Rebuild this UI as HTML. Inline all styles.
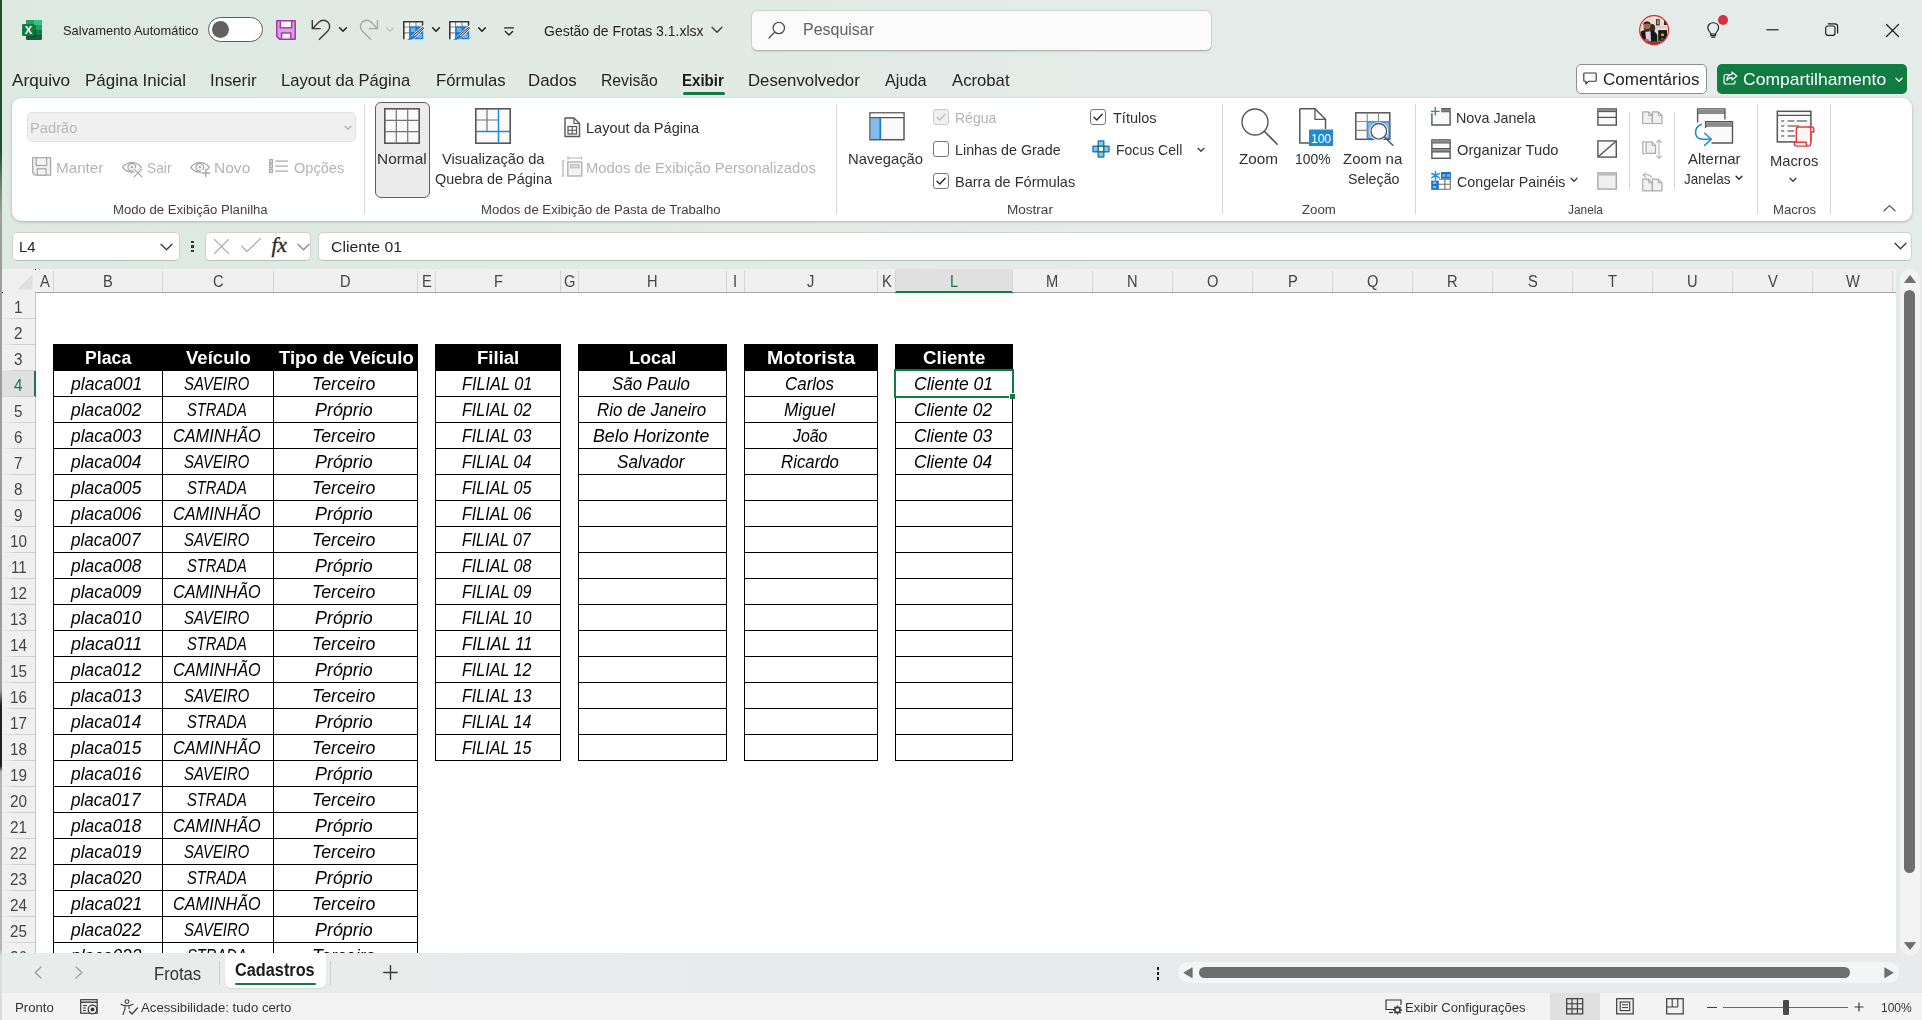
<!DOCTYPE html>
<html lang="pt-BR"><head><meta charset="utf-8"><title>Gestão de Frotas 3.1.xlsx - Excel</title><style>
html,body{margin:0;padding:0;}
body{width:1922px;height:1020px;overflow:hidden;position:relative;background:linear-gradient(90deg,#dee9e2 0,#e1eae5 500px,#e4ebe8 1100px,#e5ebe9 1922px);font-family:"Liberation Sans", sans-serif;}
div,svg,span.t{position:absolute;box-sizing:border-box;}
span.t{white-space:pre;transform-origin:0 50%;}
svg{overflow:visible;}
</style></head>
<body>
<div style="left:0px;top:0px;width:2px;height:1020px;background:linear-gradient(#1b4d2e 0px,#1b4d2e 150px,#6f8576 185px,#9aa09c 215px,#9a9e9b 690px,#1d211f 705px,#1d211f 766px,#b5b7b6 772px,#b5b7b6 950px,#dcdcdc 956px,#dcdcdc 1020px);"></div>
<svg style="left:22px;top:20px;" width="20" height="20" viewBox="0 0 20 20">
<rect x="4" y="0" width="16" height="20" rx="1.3" fill="#185c37"/>
<path d="M4 1.3 Q4 0 5.3 0 H12 V5 H4Z" fill="#21a366"/><path d="M12 0 H18.7 Q20 0 20 1.3 V5 H12Z" fill="#33c481"/>
<rect x="4" y="5" width="8" height="5" fill="#107c41"/><rect x="12" y="5" width="8" height="5" fill="#21a366"/>
<rect x="4" y="10" width="8" height="5" fill="#185c37"/><rect x="12" y="10" width="8" height="5" fill="#107c41"/>
<rect x="5" y="5" width="8.8" height="12" rx="1" fill="#0b3d22" opacity="0.55"/>
<rect x="0" y="4" width="12.5" height="12" rx="1.2" fill="#107c41"/>
<text x="6.35" y="14" font-family="Liberation Sans, sans-serif" font-size="11" font-weight="700" fill="#fff" text-anchor="middle">X</text>
</svg>
<span class="t" style="top:25.00px;font-size:12.6px;line-height:12.6px;color:#242424;left:63.20px;transform:scaleX(1.0241);">Salvamento Automático</span>
<div style="left:208px;top:17px;width:54.5px;height:24.5px;background:#fff;border:1px solid #5c5c5c;border-radius:13px;"></div>
<div style="left:212px;top:21px;width:17px;height:17px;background:#616161;border-radius:50%;"></div>
<svg style="left:276px;top:20px;" width="20" height="20" viewBox="0 0 20 20">
<path d="M0.8 0.8 H19.2 V19.2 H3.6 L0.8 16.4 Z" fill="#dc9fe0" stroke="#9f37a8" stroke-width="1.5" stroke-linejoin="round"/>
<rect x="4.3" y="0.8" width="11.4" height="7" fill="#fbf4fb" stroke="#9f37a8" stroke-width="1.4"/>
<rect x="5.6" y="13" width="9.2" height="6.2" fill="#fbf4fb" stroke="#9f37a8" stroke-width="1.4"/>
</svg>
<svg style="left:310px;top:18px;" width="22" height="24" viewBox="0 0 22 24"><path d="M2.3 2.1 V10.6 H10.7" fill="none" stroke="#3a3a3a" stroke-width="1.4" stroke-linejoin="miter"/><path d="M9 21.7 L17.8 12.9 A6.2 6.2 0 0 0 9 4.1 L2.6 10.4" fill="none" stroke="#3a3a3a" stroke-width="1.4"/></svg>
<svg style="left:338.6px;top:27.3px;" width="8" height="6" viewBox="0 0 8 6"><path d="M0.6 0.8 L4 4.2 L7.4 0.8" fill="none" stroke="#222" stroke-width="1.5" stroke-linecap="round" stroke-linejoin="round"/></svg>
<svg style="left:358px;top:18px;" width="22" height="24" viewBox="0 0 22 24"><path d="M19.5 2.1 V10.6 H11.1" fill="none" stroke="#a8a8a8" stroke-width="1.4" stroke-linejoin="miter"/><path d="M13.1 21.7 L4.3 12.9 A6.2 6.2 0 0 1 13.1 4.1 L19.2 10.4" fill="none" stroke="#a8a8a8" stroke-width="1.4"/></svg>
<svg style="left:386.3px;top:27.3px;" width="8" height="6" viewBox="0 0 8 6"><path d="M0.6 0.8 L4 4.2 L7.4 0.8" fill="none" stroke="#c2c2c2" stroke-width="1.4" stroke-linecap="round" stroke-linejoin="round"/></svg>
<svg style="left:403px;top:21px;" width="21" height="19" viewBox="0 0 21 19">
<rect x="0.7" y="0.7" width="19" height="17.5" fill="#fff"/>
<path d="M0.7 6 H19.7 M0.7 11.8 H19.7 M6.6 0.7 V18 M13 0.7 V18" stroke="#8a8a8a" stroke-width="1.2" fill="none"/>
<rect x="6.4" y="5.4" width="13.8" height="12.8" fill="#1a7ad4"/>
<rect x="7.8" y="6.8" width="4.6" height="4.2" fill="#6db3ee"/><rect x="14" y="12.6" width="5" height="4.4" fill="#6db3ee"/>
<path d="M0 0.8 H20.2 M0.8 0 V18.2 M19.5 0 V5" stroke="#3a3a3a" stroke-width="1.6" fill="none"/>
<path d="M20.5 6.5 L9 17" stroke="#e8f0ec" stroke-width="4.2" stroke-linecap="round"/>
<path d="M19.8 6.3 L20.6 7.4 L11.8 15.8 L10.2 14.4 Z" fill="#d8d8d8" stroke="#333" stroke-width="1" stroke-linejoin="round"/>
<path d="M10.2 14.2 L12 15.9 C11 18 8 19 4 18.8 C6.5 17.8 7.5 15 10.2 14.2Z" fill="#1a7ad4"/>
</svg>
<svg style="left:431.6px;top:27.3px;" width="8" height="6" viewBox="0 0 8 6"><path d="M0.6 0.8 L4 4.2 L7.4 0.8" fill="none" stroke="#222" stroke-width="1.5" stroke-linecap="round" stroke-linejoin="round"/></svg>
<svg style="left:449px;top:21px;" width="21" height="19" viewBox="0 0 21 19">
<rect x="0.7" y="0.7" width="19" height="17.5" fill="#fff"/>
<path d="M0.7 6 H19.7 M0.7 11.8 H19.7 M6.6 0.7 V18 M13 0.7 V18" stroke="#8a8a8a" stroke-width="1.2" fill="none"/>
<rect x="6.4" y="5.4" width="13.8" height="12.8" fill="#1a7ad4"/>
<rect x="7.8" y="6.8" width="4.6" height="4.2" fill="#6db3ee"/><rect x="14" y="12.6" width="5" height="4.4" fill="#6db3ee"/>
<path d="M0 0.8 H20.2 M0.8 0 V18.2 M19.5 0 V5" stroke="#3a3a3a" stroke-width="1.6" fill="none"/>
<path d="M20.5 6.5 L9 17" stroke="#e8f0ec" stroke-width="4.2" stroke-linecap="round"/>
<path d="M19.8 6.3 L20.6 7.4 L11.8 15.8 L10.2 14.4 Z" fill="#d8d8d8" stroke="#333" stroke-width="1" stroke-linejoin="round"/>
<path d="M10.2 14.2 L12 15.9 C11 18 8 19 4 18.8 C6.5 17.8 7.5 15 10.2 14.2Z" fill="#1a7ad4"/>
</svg>
<svg style="left:477.6px;top:27.3px;" width="8" height="6" viewBox="0 0 8 6"><path d="M0.6 0.8 L4 4.2 L7.4 0.8" fill="none" stroke="#222" stroke-width="1.5" stroke-linecap="round" stroke-linejoin="round"/></svg>
<svg style="left:503.5px;top:26.5px;" width="10" height="9" viewBox="0 0 10 9"><path d="M0.6 0.9 H9.4" stroke="#222" stroke-width="1.3" stroke-linecap="round"/><path d="M1.4 4.6 L5 8 L8.6 4.6" fill="none" stroke="#222" stroke-width="1.4" stroke-linecap="round" stroke-linejoin="round"/></svg>
<span class="t" style="top:24.00px;font-size:14.6px;line-height:14.6px;color:#242424;left:544.40px;transform:scaleX(0.9594);">Gestão de Frotas 3.1.xlsx</span>
<svg style="left:711px;top:26.4px;" width="12" height="8" viewBox="0 0 12 8"><path d="M1 1.2 L6 6.2 L11 1.2" fill="none" stroke="#3a3a3a" stroke-width="1.3" stroke-linecap="round" stroke-linejoin="round"/></svg>
<div style="left:752px;top:11px;width:459px;height:38.5px;background:#fbfbfb;border-radius:5px;box-shadow:0 0.5px 2px rgba(0,0,0,0.28),0 0 0 0.5px rgba(0,0,0,0.06);"></div>
<svg style="left:768px;top:21px;" width="18" height="18" viewBox="0 0 18 18"><circle cx="10.8" cy="7" r="5.7" fill="none" stroke="#505050" stroke-width="1.3"/><path d="M6.7 11.2 L1 17" stroke="#505050" stroke-width="1.3" stroke-linecap="round"/></svg>
<span class="t" style="top:22.00px;font-size:16px;line-height:16px;color:#616161;left:803.00px;transform:scaleX(0.9983);">Pesquisar</span>
<svg style="left:1639px;top:14.8px;" width="30.2" height="30.2" viewBox="0 0 30.2 30.2">
<defs><clipPath id="av"><circle cx="15.1" cy="15.1" r="14.2"/></clipPath><filter id="bl" x="-10%" y="-10%" width="120%" height="120%"><feGaussianBlur stdDeviation="0.55"/></filter></defs>
<g clip-path="url(#av)"><g filter="url(#bl)">
<rect x="-2" y="-2" width="34" height="34" fill="#e6ded2"/>
<rect x="-2" y="-2" width="34" height="5" fill="#f4f1ea"/>
<rect x="17" y="4.2" width="3.8" height="6.2" fill="#2f3a52"/><rect x="18" y="5.3" width="1.9" height="4" fill="#b99a55"/>
<rect x="25" y="5.5" width="3" height="4.5" fill="#2a2a2a"/>
<rect x="15" y="11.5" width="15" height="1" fill="#cfc6b8"/>
<ellipse cx="13.3" cy="13.2" rx="2.8" ry="4.2" fill="#3b2b27"/>
<path d="M1.2 31 V18 C1.6 16 3.4 15.4 5.5 15.2 L11.5 15.6 C15.5 16 17.5 17.5 18.3 20.5 V31Z" fill="#121214"/>
<path d="M6.3 16.8 L11.6 16.2 L12 26.5 H7.2 Z" fill="#d9d0e2"/>
<ellipse cx="8" cy="11" rx="3.5" ry="4.6" fill="#9c6a4f"/>
<path d="M4.3 10 C3.8 5.4 12.2 5.4 11.7 10 C10.6 7.9 5.4 7.9 4.3 10Z" fill="#241c1a"/>
<path d="M4.6 12.5 C5 17.2 11 17.2 11.4 12.5 C10.4 14.6 5.6 14.6 4.6 12.5Z" fill="#3a2620"/>
<ellipse cx="7.6" cy="25.4" rx="2.6" ry="1.6" fill="#a9745a"/>
<rect x="19.2" y="15.1" width="8.8" height="10.8" fill="#1c1a18"/>
<ellipse cx="23.5" cy="19.9" rx="1.7" ry="1.4" fill="#d9a62e"/>
<rect x="21.5" y="23.6" width="3.6" height="0.8" fill="#8a8a8a"/>
<rect x="-2" y="26.3" width="34" height="6" fill="#6b4a34"/>
</g></g>
<circle cx="15.1" cy="15.1" r="14.5" fill="none" stroke="#e0262c" stroke-width="1.1"/>
</svg>
<svg style="left:1706.5px;top:22px;" width="12.5" height="16" viewBox="0 0 12.5 16"><path d="M6.2 0.7 C2.9 0.7 0.8 3.1 0.8 5.8 C0.8 7.7 1.9 8.8 2.8 10 C3.3 10.7 3.6 11.2 3.7 12 H8.7 C8.8 11.2 9.1 10.7 9.6 10 C10.5 8.8 11.6 7.7 11.6 5.8 C11.6 3.1 9.5 0.7 6.2 0.7Z" fill="none" stroke="#1f1f1f" stroke-width="1.15"/><path d="M3.9 12 V13.6 H8.5 V12 M4.6 15.3 H7.8" fill="none" stroke="#1f1f1f" stroke-width="1.1" stroke-linecap="round"/></svg>
<div style="left:1717.7px;top:14.7px;width:10.3px;height:10.3px;background:#d9303e;border-radius:50%;"></div>
<svg style="left:1765.5px;top:28.7px;" width="13" height="2" viewBox="0 0 13 2"><path d="M0.4 0.75 H12.6" stroke="#1f1f1f" stroke-width="1.2"/></svg>
<svg style="left:1825.3px;top:23.3px;" width="13.5" height="13.5" viewBox="0 0 13.5 13.5"><rect x="0.7" y="3" width="9.3" height="9.3" rx="2" fill="none" stroke="#1f1f1f" stroke-width="1.2"/><path d="M3.2 0.8 H9.8 C11.5 0.8 12.6 1.9 12.6 3.6 V10" fill="none" stroke="#1f1f1f" stroke-width="1.2" stroke-linecap="round"/></svg>
<svg style="left:1885.7px;top:23.5px;" width="13" height="13" viewBox="0 0 13 13"><path d="M0.5 0.5 L12.5 12.5 M12.5 0.5 L0.5 12.5" stroke="#1f1f1f" stroke-width="1.2" stroke-linecap="round"/></svg>
<span class="t" style="top:72.00px;font-size:16.4px;line-height:16.4px;color:#242424;left:11.50px;transform:scaleX(1.0458);">Arquivo</span>
<span class="t" style="top:72.00px;font-size:16.4px;line-height:16.4px;color:#242424;left:85.47px;transform:scaleX(1.0349);">Página Inicial</span>
<span class="t" style="top:72.00px;font-size:16.4px;line-height:16.4px;color:#242424;left:209.68px;transform:scaleX(1.0204);">Inserir</span>
<span class="t" style="top:72.00px;font-size:16.4px;line-height:16.4px;color:#242424;left:280.99px;transform:scaleX(1.0120);">Layout da Página</span>
<span class="t" style="top:72.00px;font-size:16.4px;line-height:16.4px;color:#242424;left:435.98px;transform:scaleX(1.0207);">Fórmulas</span>
<span class="t" style="top:72.00px;font-size:16.4px;line-height:16.4px;color:#242424;left:528.47px;transform:scaleX(1.0285);">Dados</span>
<span class="t" style="top:72.00px;font-size:16.4px;line-height:16.4px;color:#242424;left:600.74px;transform:scaleX(0.9604);">Revisão</span>
<span class="t" style="top:72.00px;font-size:16.4px;line-height:16.4px;color:#242424;left:747.68px;transform:scaleX(1.0223);">Desenvolvedor</span>
<span class="t" style="top:72.00px;font-size:16.4px;line-height:16.4px;color:#242424;left:885.00px;transform:scaleX(0.9929);">Ajuda</span>
<span class="t" style="top:72.00px;font-size:16.4px;line-height:16.4px;color:#242424;left:952.00px;transform:scaleX(1.0187);">Acrobat</span>
<span class="t" style="top:72.00px;font-size:16.4px;line-height:16.4px;color:#1a1a1a;font-weight:700;left:682.08px;transform:scaleX(0.9188);">Exibir</span>
<div style="left:683px;top:91.5px;width:42px;height:3px;background:#107c41;border-radius:1.5px;"></div>
<div style="left:1576px;top:64px;width:131px;height:30px;background:#fff;border:1px solid #8f8f8f;border-radius:5px;"></div>
<svg style="left:1583px;top:71.5px;" width="14" height="13" viewBox="0 0 14 13"><path d="M1.6 1 H12.4 C12.9 1 13.2 1.3 13.2 1.8 V8.4 C13.2 8.9 12.9 9.2 12.4 9.2 H5.8 L2.8 12 V9.2 H1.6 C1.1 9.2 0.8 8.9 0.8 8.4 V1.8 C0.8 1.3 1.1 1 1.6 1Z" fill="none" stroke="#3a3a3a" stroke-width="1.15" stroke-linejoin="round"/></svg>
<span class="t" style="top:71.00px;font-size:16.4px;line-height:16.4px;color:#242424;left:1602.50px;transform:scaleX(1.0386);">Comentários</span>
<div style="left:1717px;top:64px;width:190px;height:30px;background:#107c41;border-radius:5px;"></div>
<svg style="left:1722.5px;top:71px;" width="15" height="14" viewBox="0 0 15 14"><path d="M5.5 3.5 H3 C1.9 3.5 1 4.4 1 5.5 V11 C1 12.1 1.9 13 3 13 H10 C11.1 13 12 12.1 12 11 V9.8" fill="none" stroke="#fff" stroke-width="1.15" stroke-linecap="round"/><path d="M9 1 L13.8 5 L9 9 V6.6 C6.5 6.4 4.8 7.6 3.8 9.6 C4 6 5.8 3.6 9 3.4Z" fill="none" stroke="#fff" stroke-width="1.1" stroke-linejoin="round"/></svg>
<span class="t" style="top:71.00px;font-size:16.4px;line-height:16.4px;color:#ffffff;left:1743.40px;transform:scaleX(1.0687);">Compartilhamento</span>
<svg style="left:1894.5px;top:76.5px;" width="8" height="6" viewBox="0 0 8 6"><path d="M1 1.2 L4 4.2 L7 1.2" fill="none" stroke="#fff" stroke-width="1.3" stroke-linecap="round" stroke-linejoin="round"/></svg>
<div style="left:12px;top:98px;width:1900px;height:123px;background:#ffffff;border-radius:9px;box-shadow:0 1px 3px rgba(0,0,0,0.22),0 0 1px rgba(0,0,0,0.12);"></div>
<div style="left:364.0px;top:104px;width:1px;height:110px;background:#d6d6d6;"></div>
<div style="left:836.1px;top:104px;width:1px;height:110px;background:#d6d6d6;"></div>
<div style="left:1221.9px;top:104px;width:1px;height:110px;background:#d6d6d6;"></div>
<div style="left:1414.8px;top:104px;width:1px;height:110px;background:#d6d6d6;"></div>
<div style="left:1756.9px;top:104px;width:1px;height:110px;background:#d6d6d6;"></div>
<div style="left:1829.8px;top:104px;width:1px;height:110px;background:#d6d6d6;"></div>
<div style="left:1629.2px;top:111.5px;width:1px;height:77.0px;background:#d6d6d6;"></div>
<div style="left:1673.8px;top:111.5px;width:1px;height:77.0px;background:#d6d6d6;"></div>
<div style="left:27px;top:112px;width:328.5px;height:30px;background:#f0f0f0;border:1px solid #e3e3e3;border-radius:5px;"></div>
<span class="t" style="top:120.00px;font-size:15.2px;line-height:15.2px;color:#b8b8b8;left:29.53px;transform:scaleX(0.9679);">Padrão</span>
<svg style="left:343.5px;top:124.5px;" width="8" height="6.0" viewBox="0 0 8 6.0"><path d="M1 1.2 L4.0 4.2 L7 1.2" fill="none" stroke="#b0b0b0" stroke-width="1.3" stroke-linecap="round" stroke-linejoin="round"/></svg>
<svg style="left:32px;top:157px;" width="19.5" height="19" viewBox="0 0 19.5 19"><path d="M0.7 0.7 H18.6 V18.2 H3.4 L0.7 15.5 Z" fill="#f1f1f1" stroke="#a9a9a9" stroke-width="1.3" stroke-linejoin="round"/><rect x="4.2" y="0.7" width="10.4" height="7.8" fill="#f5f5f5" stroke="#a9a9a9" stroke-width="1.3"/><rect x="5.4" y="11.8" width="8.6" height="6.4" fill="#f5f5f5" stroke="#a9a9a9" stroke-width="1.3"/></svg>
<span class="t" style="top:161.00px;font-size:14.4px;line-height:14.4px;color:#b4b4b4;left:56.24px;transform:scaleX(1.0569);">Manter</span>
<svg style="left:121.7px;top:161.6px;" width="22" height="17" viewBox="0 0 22 17"><path d="M0.7 5.4 C3.8 1.4 7 0.7 10 0.7 C13 0.7 16.2 1.4 19.3 5.4 C16.2 9.4 13 10.1 10 10.1 C7 10.1 3.8 9.4 0.7 5.4Z" fill="none" stroke="#a6a6a6" stroke-width="1.3" stroke-linejoin="round"/><circle cx="9.8" cy="5.3" r="3.9" fill="#f1f1f1" stroke="#a6a6a6" stroke-width="1.2"/><circle cx="9.9" cy="5.2" r="1.1" fill="#a6a6a6"/><path d="M12 7 L20.2 15.2 M20.2 7 L12 15.2" stroke="#fff" stroke-width="3.4"/><path d="M11.8 6.8 L20.2 15.2 M20.2 6.8 L11.8 15.2" stroke="#a6a6a6" stroke-width="1.2"/></svg>
<span class="t" style="top:161.00px;font-size:14.4px;line-height:14.4px;color:#b4b4b4;left:147.30px;transform:scaleX(0.9574);">Sair</span>
<svg style="left:189.7px;top:161.6px;" width="22" height="17" viewBox="0 0 22 17"><path d="M0.7 5.4 C3.8 1.4 7 0.7 10 0.7 C13 0.7 16.2 1.4 19.3 5.4 C16.2 9.4 13 10.1 10 10.1 C7 10.1 3.8 9.4 0.7 5.4Z" fill="none" stroke="#a6a6a6" stroke-width="1.3" stroke-linejoin="round"/><circle cx="9.8" cy="5.3" r="3.9" fill="#f1f1f1" stroke="#a6a6a6" stroke-width="1.2"/><circle cx="9.9" cy="5.2" r="1.1" fill="#a6a6a6"/><path d="M11 8 H21 V16.5 H11Z" fill="#fff"/><path d="M15.8 6.8 V15.3 M11.4 11 H20.2" stroke="#a6a6a6" stroke-width="1.3"/></svg>
<span class="t" style="top:161.00px;font-size:14.4px;line-height:14.4px;color:#b4b4b4;left:214.42px;transform:scaleX(1.0800);">Novo</span>
<svg style="left:269px;top:159.4px;" width="19.5" height="14.2" viewBox="0 0 19.5 14.2"><rect x="0" y="0" width="4" height="14.2" fill="#a9a9a9"/><rect x="1.3" y="1.4" width="1.6" height="1.6" fill="#f5f5f5"/><rect x="1.3" y="6.3" width="1.6" height="1.6" fill="#f5f5f5"/><rect x="1.3" y="11.2" width="1.6" height="1.6" fill="#f5f5f5"/><path d="M0 4.7 H4 M0 9.6 H4" stroke="#d8d8d8" stroke-width="0.8"/><path d="M6.2 2.1 H19 M6.2 7.1 H19 M6.2 12.1 H19" stroke="#a9a9a9" stroke-width="1.4"/></svg>
<span class="t" style="top:161.00px;font-size:14.4px;line-height:14.4px;color:#b4b4b4;left:294.00px;transform:scaleX(1.0122);">Opções</span>
<span class="t" style="top:204.00px;font-size:12.0px;line-height:12.0px;color:#404040;left:113.00px;transform:scaleX(1.0935);">Modo de Exibição Planilha</span>
<div style="left:375px;top:102px;width:55px;height:96px;background:#ebebeb;border:1px solid #5f5f5f;border-radius:6px;"></div>
<svg style="left:384px;top:108px;" width="36" height="36" viewBox="0 0 36 36"><rect x="0.8" y="0.8" width="34.4" height="34.4" fill="#fafafa" stroke="#565656" stroke-width="1.6"/>
<path d="M0.8 12.3 H35.2 M0.8 23.7 H35.2 M12.3 0.8 V35.2 M23.7 0.8 V35.2" stroke="#757575" stroke-width="1.2" fill="none"/></svg>
<span class="t" style="top:152.00px;font-size:14.4px;line-height:14.4px;color:#303030;left:376.73px;transform:scaleX(1.0713);">Normal</span>
<svg style="left:474.8px;top:108px;" width="36" height="36" viewBox="0 0 36 36"><rect x="0.8" y="0.8" width="34.4" height="34.4" fill="#fafafa" stroke="#565656" stroke-width="1.6"/>
<path d="M0.8 12 H23 M12 0.8 V23" stroke="#757575" stroke-width="1.2" fill="none"/>
<path d="M0.8 23.5 H35.2 M23.5 0.8 V35.2" stroke="#1e8ad6" stroke-width="1.5" fill="none"/></svg>
<span class="t" style="top:152.00px;font-size:14.4px;line-height:14.4px;color:#303030;left:442.40px;transform:scaleX(1.0196);">Visualização da</span>
<span class="t" style="top:172.00px;font-size:14.4px;line-height:14.4px;color:#303030;left:434.50px;transform:scaleX(1.0008);">Quebra de Página</span>
<svg style="left:564px;top:117px;" width="16.5" height="20.5" viewBox="0 0 16.5 20.5"><path d="M1 1 H10 L15.5 6.5 V19.5 H1 Z" fill="#fafafa" stroke="#565656" stroke-width="1.4" stroke-linejoin="round"/><path d="M10 1 V6.5 H15.5" fill="none" stroke="#565656" stroke-width="1.2"/>
<rect x="4" y="9.5" width="8.5" height="7.5" fill="none" stroke="#565656" stroke-width="1.2"/><path d="M4 13.2 H12.5 M8.2 9.5 V17" stroke="#565656" stroke-width="1.1"/></svg>
<span class="t" style="top:121.00px;font-size:14.4px;line-height:14.4px;color:#303030;left:586.39px;transform:scaleX(1.0098);">Layout da Página</span>
<svg style="left:562px;top:157px;" width="21" height="20" viewBox="0 0 21 20"><path d="M1 4 V19 M-0.5 4 H2.5 M-0.5 19 H2.5" stroke="#b4b4b4" stroke-width="1.2"/><path d="M6 1 H19.5 M6 -0.5 V2.5 M19.5 -0.5 V2.5" stroke="#b4b4b4" stroke-width="1.2"/>
<rect x="5.8" y="5" width="14" height="14" fill="#f3f3f3" stroke="#b4b4b4" stroke-width="1.4"/><rect x="8.5" y="7.8" width="8.5" height="3" fill="#e0e0e0" stroke="#b4b4b4" stroke-width="1"/></svg>
<span class="t" style="top:161.00px;font-size:14.4px;line-height:14.4px;color:#b4b4b4;left:586.37px;transform:scaleX(1.0261);">Modos de Exibição Personalizados</span>
<span class="t" style="top:204.00px;font-size:12.0px;line-height:12.0px;color:#404040;left:480.60px;transform:scaleX(1.0951);">Modos de Exibição de Pasta de Trabalho</span>
<svg style="left:869px;top:112px;" width="36" height="28.5" viewBox="0 0 36 28.5"><rect x="1" y="0.9" width="34" height="26.8" fill="#fafafa" stroke="#565656" stroke-width="1.5"/>
<rect x="1.7" y="5.8" width="9.6" height="21.2" fill="#80bdf0"/><rect x="1.7" y="1.6" width="32.6" height="3.4" fill="#fff"/><path d="M1 5.6 H35" stroke="#565656" stroke-width="1.4"/><path d="M11.3 6.2 V27" stroke="#1e78c8" stroke-width="1.7"/></svg>
<span class="t" style="top:152.00px;font-size:14.4px;line-height:14.4px;color:#303030;left:848.37px;transform:scaleX(1.0320);">Navegação</span>
<div style="left:933px;top:109.3px;width:16px;height:16px;background:#f0f0f0;border:1px solid #c8c8c8;border-radius:3px;"></div>
<svg style="left:936px;top:113.3px;" width="10" height="8" viewBox="0 0 10 8"><path d="M1 4.2 L3.8 7 L9.2 1.2" fill="none" stroke="#c0c0c0" stroke-width="1.3" stroke-linecap="round" stroke-linejoin="round"/></svg>
<span class="t" style="top:111.00px;font-size:14.4px;line-height:14.4px;color:#b4b4b4;left:954.93px;transform:scaleX(0.9734);">Régua</span>
<div style="left:933px;top:141.3px;width:16px;height:16px;background:#fff;border:1px solid #767676;border-radius:3px;"></div>
<span class="t" style="top:143.00px;font-size:14.4px;line-height:14.4px;color:#303030;left:954.91px;transform:scaleX(0.9933);">Linhas de Grade</span>
<div style="left:933px;top:173.3px;width:16px;height:16px;background:#fff;border:1px solid #767676;border-radius:3px;"></div>
<svg style="left:936px;top:177.3px;" width="10" height="8" viewBox="0 0 10 8"><path d="M1 4.2 L3.8 7 L9.2 1.2" fill="none" stroke="#242424" stroke-width="1.3" stroke-linecap="round" stroke-linejoin="round"/></svg>
<span class="t" style="top:175.00px;font-size:14.4px;line-height:14.4px;color:#303030;left:954.89px;transform:scaleX(1.0087);">Barra de Fórmulas</span>
<div style="left:1090px;top:109.3px;width:16px;height:16px;background:#fff;border:1px solid #767676;border-radius:3px;"></div>
<svg style="left:1093px;top:113.3px;" width="10" height="8" viewBox="0 0 10 8"><path d="M1 4.2 L3.8 7 L9.2 1.2" fill="none" stroke="#242424" stroke-width="1.3" stroke-linecap="round" stroke-linejoin="round"/></svg>
<span class="t" style="top:111.00px;font-size:14.4px;line-height:14.4px;color:#303030;left:1112.70px;transform:scaleX(1.0072);">Títulos</span>
<svg style="left:1092px;top:140px;" width="18" height="18" viewBox="0 0 18 18"><path d="M6.2 1 H11.8 V6.2 H17 V11.8 H11.8 V17 H6.2 V11.8 H1 V6.2 H6.2 Z" fill="#8cc4f0" stroke="#1e78c8" stroke-width="1.4" stroke-linejoin="round"/>
<rect x="6.2" y="6.2" width="5.6" height="5.6" fill="#fff" stroke="#107c41" stroke-width="1.4"/></svg>
<span class="t" style="top:143.00px;font-size:14.4px;line-height:14.4px;color:#303030;left:1115.53px;transform:scaleX(0.9749);">Focus Cell</span>
<svg style="left:1197.3px;top:146.8px;" width="8" height="6.0" viewBox="0 0 8 6.0"><path d="M1 1.2 L4.0 4.2 L7 1.2" fill="none" stroke="#3a3a3a" stroke-width="1.3" stroke-linecap="round" stroke-linejoin="round"/></svg>
<span class="t" style="top:204.00px;font-size:12.0px;line-height:12.0px;color:#404040;left:1006.60px;transform:scaleX(1.1285);">Mostrar</span>
<svg style="left:1241px;top:108px;" width="38" height="38" viewBox="0 0 38 38"><circle cx="14" cy="14" r="13" fill="none" stroke="#565656" stroke-width="1.4"/><path d="M23.2 23.2 L36.2 36.2" stroke="#565656" stroke-width="1.6" stroke-linecap="round"/></svg>
<span class="t" style="top:152.00px;font-size:14.4px;line-height:14.4px;color:#303030;left:1239.20px;transform:scaleX(1.0626);">Zoom</span>
<svg style="left:1299px;top:108px;" width="35" height="39" viewBox="0 0 35 39"><path d="M0.8 0.8 H16 L26.5 11.3 V21 M10 35 H0.8 V0.8" fill="none" stroke="#565656" stroke-width="1.5" stroke-linejoin="round"/><path d="M16 0.8 V11.3 H26.5" fill="none" stroke="#565656" stroke-width="1.3"/>
<rect x="10" y="21.5" width="24" height="16.5" fill="#1e8ad6"/>
<text x="22" y="35" font-family="Liberation Sans, sans-serif" font-size="13" fill="#fff" text-anchor="middle" textLength="20" lengthAdjust="spacingAndGlyphs">100</text></svg>
<span class="t" style="top:152.00px;font-size:14.4px;line-height:14.4px;color:#303030;left:1295.04px;transform:scaleX(0.9636);">100%</span>
<svg style="left:1355px;top:112px;" width="39" height="34" viewBox="0 0 39 34"><rect x="0.8" y="0.8" width="34" height="26.5" fill="#fafafa" stroke="#565656" stroke-width="1.5"/>
<rect x="12.5" y="9.8" width="22" height="17" fill="#7dbbee" stroke="#1e78c8" stroke-width="1.2"/>
<path d="M0.8 9.5 H34.8 M0.8 18.4 H12 M12.2 0.8 V27 M23.5 0.8 V9.5" stroke="#8a8a8a" stroke-width="1.1" fill="none"/>
<circle cx="23.8" cy="19.3" r="9.3" fill="#fff"/><circle cx="23.8" cy="19.3" r="7.8" fill="#fafafa" stroke="#565656" stroke-width="1.4"/><path d="M29.5 25 L37.8 33.2" stroke="#565656" stroke-width="1.5" stroke-linecap="round"/></svg>
<span class="t" style="top:152.00px;font-size:14.4px;line-height:14.4px;color:#303030;left:1343.00px;transform:scaleX(1.0443);">Zoom na</span>
<span class="t" style="top:172.00px;font-size:14.4px;line-height:14.4px;color:#303030;left:1347.50px;transform:scaleX(0.9904);">Seleção</span>
<span class="t" style="top:204.00px;font-size:12.0px;line-height:12.0px;color:#404040;left:1302.00px;transform:scaleX(1.0985);">Zoom</span>
<svg style="left:1431px;top:108px;" width="20" height="18" viewBox="0 0 20 18"><path d="M0.9 5.3 V17 H19.1 V3.5 H10.2" fill="#fafafa" stroke="#565656" stroke-width="1.4" stroke-linejoin="miter"/><rect x="10.2" y="0.2" width="9.6" height="3.3" fill="#858585"/><path d="M10.2 0.7 H19.8" stroke="#565656" stroke-width="1.2"/>
<path d="M4.3 -1 V7.6 M0 3.3 H8.6" stroke="#2b9b3f" stroke-width="1.35"/></svg>
<span class="t" style="top:111.00px;font-size:14.4px;line-height:14.4px;color:#303030;left:1455.71px;transform:scaleX(0.9950);">Nova Janela</span>
<svg style="left:1431px;top:139px;" width="20" height="20" viewBox="0 0 20 20"><rect x="0.9" y="0.9" width="18.2" height="18.4" fill="#fafafa" stroke="#565656" stroke-width="1.4"/>
<rect x="1.2" y="1.2" width="17.6" height="2.6" fill="#8a8a8a"/><rect x="1.2" y="10.3" width="17.6" height="2.4" fill="#8a8a8a"/>
<path d="M0.9 4 H19.1 M0.9 9.7 H19.1 M0.9 12.9 H19.1" stroke="#565656" stroke-width="1.2"/></svg>
<span class="t" style="top:143.00px;font-size:14.4px;line-height:14.4px;color:#303030;left:1456.70px;transform:scaleX(1.0237);">Organizar Tudo</span>
<svg style="left:1431px;top:172px;" width="20" height="18" viewBox="0 0 20 18"><rect x="8.2" y="6.8" width="11.2" height="10.6" fill="#fff"/>
<rect x="10" y="0" width="9.9" height="6.7" fill="#1a6fc4"/><rect x="11.4" y="2.2" width="3" height="2.6" fill="#7fb5e8"/><rect x="15.8" y="2.2" width="3" height="2.6" fill="#7fb5e8"/>
<rect x="0.2" y="8.6" width="7.6" height="9.3" fill="#1a6fc4"/><rect x="1.8" y="9.6" width="3.6" height="2.4" fill="#7fb5e8"/><rect x="1.8" y="13.8" width="3.6" height="2.4" fill="#7fb5e8"/>
<path d="M7.8 12.3 H19.8 M13.9 6.8 V17.8 M19.3 6.8 V17.8 M7.8 17.3 H19.8 M8 7.2 H19.8" stroke="#6e6e6e" stroke-width="1.1" fill="none"/>
<path d="M4.5 -0.6 V7.8 M0.8 1.5 L8.2 5.7 M8.2 1.5 L0.8 5.7" stroke="#1e8fe0" stroke-width="1.5" stroke-linecap="round"/></svg>
<span class="t" style="top:175.00px;font-size:14.4px;line-height:14.4px;color:#303030;left:1456.70px;transform:scaleX(0.9899);">Congelar Painéis</span>
<svg style="left:1569.8px;top:176.8px;" width="8" height="6.0" viewBox="0 0 8 6.0"><path d="M1 1.2 L4.0 4.2 L7 1.2" fill="none" stroke="#3a3a3a" stroke-width="1.3" stroke-linecap="round" stroke-linejoin="round"/></svg>
<span class="t" style="top:204.00px;font-size:12.0px;line-height:12.0px;color:#404040;left:1568.40px;transform:scaleX(0.9891);">Janela</span>
<svg style="left:1597px;top:108px;" width="20.5" height="18" viewBox="0 0 20.5 18"><rect x="0.9" y="0.9" width="18.4" height="16.2" fill="#fafafa" stroke="#565656" stroke-width="1.4"/><rect x="1.2" y="1.2" width="17.8" height="2.2" fill="#8a8a8a"/><path d="M0.9 3.6 H19.3" stroke="#565656" stroke-width="1.1"/><path d="M0.9 9.4 H19.3" stroke="#565656" stroke-width="1.3"/></svg>
<svg style="left:1597px;top:140px;" width="20.5" height="18" viewBox="0 0 20.5 18"><rect x="0.9" y="0.9" width="18.4" height="16.2" fill="#fafafa" stroke="#565656" stroke-width="1.4"/><path d="M1.2 16.8 L19 1.2" stroke="#565656" stroke-width="1.4"/></svg>
<svg style="left:1597px;top:172px;" width="20.5" height="18" viewBox="0 0 20.5 18"><rect x="0.9" y="0.9" width="18.4" height="16.2" fill="#f0f0f0" stroke="#a9a9a9" stroke-width="1.4"/><rect x="1.2" y="1.2" width="17.8" height="2.4" fill="#bdbdbd"/></svg>
<svg style="left:1642px;top:110.5px;" width="21" height="13" viewBox="0 0 21 13"><path d="M0.7 0.9 H6.699999999999999 L10.299999999999999 4.5 V12.5 H0.7 Z" fill="#f0f0f0" stroke="#ababab" stroke-width="1.2" stroke-linejoin="round"/><path d="M6.699999999999999 0.9 V4.5 H10.299999999999999" fill="none" stroke="#ababab" stroke-width="1"/><path d="M10.4 0.9 H16.4 L20.0 4.5 V12.5 H10.4 Z" fill="#f0f0f0" stroke="#ababab" stroke-width="1.2" stroke-linejoin="round"/><path d="M16.4 0.9 V4.5 H20.0" fill="none" stroke="#ababab" stroke-width="1"/></svg>
<svg style="left:1642px;top:139px;" width="21" height="21" viewBox="0 0 21 21"><path d="M3 2.8 H0.8 V14.6 H3" stroke="#ababab" stroke-width="1.2" fill="none"/><path d="M4 2.8 H10.0 L13.6 6.4 V14.399999999999999 H4 Z" fill="#f0f0f0" stroke="#ababab" stroke-width="1.2" stroke-linejoin="round"/><path d="M10.0 2.8 V6.4 H13.6" fill="none" stroke="#ababab" stroke-width="1"/><path d="M17 1 V19.2 M14.3 3.8 L17 0.9 L19.7 3.8 M14.3 16.6 L17 19.5 L19.7 16.6" stroke="#bdbdbd" stroke-width="1.3" fill="none"/></svg>
<svg style="left:1642px;top:170.5px;" width="21" height="21" viewBox="0 0 21 21"><path d="M1.2 4.2 C5 3 8.5 4 9.8 6.6 M3.8 1.6 L1 4.3 L4.2 6.6" stroke="#bdbdbd" stroke-width="1.2" fill="none" stroke-linecap="round"/><path d="M0.7 8.2 H6.699999999999999 L10.299999999999999 11.799999999999999 V19.799999999999997 H0.7 Z" fill="#f0f0f0" stroke="#ababab" stroke-width="1.2" stroke-linejoin="round"/><path d="M6.699999999999999 8.2 V11.799999999999999 H10.299999999999999" fill="none" stroke="#ababab" stroke-width="1"/><path d="M10.4 8.2 H16.4 L20.0 11.799999999999999 V19.799999999999997 H10.4 Z" fill="#f0f0f0" stroke="#ababab" stroke-width="1.2" stroke-linejoin="round"/><path d="M16.4 8.2 V11.799999999999999 H20.0" fill="none" stroke="#ababab" stroke-width="1"/></svg>
<svg style="left:1694px;top:108px;" width="40" height="39" viewBox="0 0 40 39"><path d="M3.6 14.5 V0.9 H30.9 V11.6" fill="#fafafa" stroke="#565656" stroke-width="1.4"/><rect x="4.3" y="1.6" width="25.9" height="2.9" fill="#8a8a8a"/><path d="M3.6 5.1 H30.9" stroke="#565656" stroke-width="1.2"/>
<path d="M11.6 20 V13.7 H38.5 V35 H17.5" fill="#fafafa" stroke="#565656" stroke-width="1.4"/><rect x="12.3" y="14.4" width="25.5" height="2.9" fill="#8a8a8a"/><path d="M11.6 18 H38.5" stroke="#565656" stroke-width="1.2"/>
<path d="M7.3 16.2 C-0.5 19.5 -0.8 31 9 31.2 H16.5" fill="none" stroke="#1e8ad6" stroke-width="1.5" stroke-linecap="round"/><path d="M10.6 25.2 L17.3 31.2 L10.6 37.4" fill="none" stroke="#1e8ad6" stroke-width="1.5" stroke-linecap="round" stroke-linejoin="round"/></svg>
<span class="t" style="top:152.00px;font-size:14.4px;line-height:14.4px;color:#303030;left:1688.00px;transform:scaleX(1.0436);">Alternar</span>
<span class="t" style="top:172.00px;font-size:14.4px;line-height:14.4px;color:#303030;left:1684.30px;transform:scaleX(0.9351);">Janelas</span>
<svg style="left:1735.3px;top:174.6px;" width="8" height="6.0" viewBox="0 0 8 6.0"><path d="M1 1.2 L4.0 4.2 L7 1.2" fill="none" stroke="#222" stroke-width="1.3" stroke-linecap="round" stroke-linejoin="round"/></svg>
<svg style="left:1776px;top:109.5px;" width="40" height="38" viewBox="0 0 40 38"><rect x="1.3" y="1.3" width="33.6" height="30.6" fill="#fafafa" stroke="#565656" stroke-width="1.5"/><path d="M1.3 5.4 H34.9" stroke="#565656" stroke-width="1.4"/>
<path d="M5.2 11 H8.2 M11.6 11 H18.4 M20.8 11 H31 M5.2 16 H8.2 M11.6 16 H23 M5.2 21 H8.2 M11.6 21 H18 M5.2 26 H8.2 M11.6 26 H19" stroke="#7a7a7a" stroke-width="1.3"/>
<path d="M20.3 33 V19.5 C20.3 17.8 21.3 17 22.8 17 H35.5 C37.2 17 37.8 18 37.8 19.5 V22 H34.8 V33.5 C34.8 35.2 33.8 36.1 32.3 36.1 H20.8 C19 36.1 18.3 35.2 18.3 33.5 V32.2 H30.2 V33.5 C30.2 35.2 31 36.1 32.3 36.1" fill="#fdf6f6" stroke="#e8393f" stroke-width="1.4" stroke-linejoin="round"/>
<path d="M34.8 22 V19.5 C34.8 18 34.2 17 32.8 17" fill="none" stroke="#e8393f" stroke-width="1.3"/></svg>
<span class="t" style="top:154.00px;font-size:14.4px;line-height:14.4px;color:#303030;left:1769.58px;transform:scaleX(1.0243);">Macros</span>
<svg style="left:1789.4px;top:177.2px;" width="8" height="6.0" viewBox="0 0 8 6.0"><path d="M1 1.2 L4.0 4.2 L7 1.2" fill="none" stroke="#3a3a3a" stroke-width="1.3" stroke-linecap="round" stroke-linejoin="round"/></svg>
<span class="t" style="top:204.00px;font-size:12.0px;line-height:12.0px;color:#404040;left:1772.50px;transform:scaleX(1.0956);">Macros</span>
<svg style="left:1883.4px;top:203.6px;" width="13" height="8" viewBox="0 0 13 8"><path d="M1 6.8 L6.5 1.6 L12 6.8" fill="none" stroke="#565656" stroke-width="1.3" stroke-linecap="round" stroke-linejoin="round"/></svg>
<div style="left:12px;top:231.5px;width:168px;height:29.5px;background:#fff;border-radius:5px;border:1px solid #ced2d0;border-bottom-color:#b9bdbb;"></div>
<span class="t" style="top:239.00px;font-size:15px;line-height:15px;color:#242424;left:19.01px;transform:scaleX(0.9907);">L4</span>
<svg style="left:159.5px;top:243px;" width="13" height="8" viewBox="0 0 13 8"><path d="M1 1.2 L6.5 6.7 L12 1.2" fill="none" stroke="#3a3a3a" stroke-width="1.3" stroke-linecap="round" stroke-linejoin="round"/></svg>
<div style="left:191.3px;top:240.6px;width:2.7px;height:2.7px;background:#3a3a3a;"></div>
<div style="left:191.3px;top:245.1px;width:2.7px;height:2.7px;background:#3a3a3a;"></div>
<div style="left:191.3px;top:249.6px;width:2.7px;height:2.7px;background:#3a3a3a;"></div>
<div style="left:205.3px;top:231.5px;width:106.2px;height:29.5px;background:#fff;border-radius:5px;border:1px solid #ced2d0;border-bottom-color:#b9bdbb;"></div>
<svg style="left:212.5px;top:237.5px;" width="17" height="17" viewBox="0 0 17 17"><path d="M1.5 1.5 L15.5 15.5 M15.5 1.5 L1.5 15.5" stroke="#b0b0b0" stroke-width="1.3" stroke-linecap="round"/></svg>
<svg style="left:240px;top:237.3px;" width="22" height="16" viewBox="0 0 22 16"><path d="M1.5 9 L7 14.5 L20.5 1.5" fill="none" stroke="#b0b0b0" stroke-width="1.3" stroke-linecap="round" stroke-linejoin="round"/></svg>
<span class="t" style="left:271.5px;top:234px;font-family:'Liberation Serif',serif;font-style:italic;font-weight:400;font-size:21.5px;line-height:22px;color:#2a2a2a;letter-spacing:-0.3px;-webkit-text-stroke:0.35px #2a2a2a;">fx</span>
<svg style="left:297px;top:243px;" width="13" height="8" viewBox="0 0 13 8"><path d="M1 1.2 L6.5 6.7 L12 1.2" fill="none" stroke="#8a8a8a" stroke-width="1.3" stroke-linecap="round" stroke-linejoin="round"/></svg>
<div style="left:318px;top:231.5px;width:1593.7px;height:29.5px;background:#fff;border-radius:5px;border:1px solid #ced2d0;border-bottom-color:#b9bdbb;"></div>
<span class="t" style="top:239.00px;font-size:15px;line-height:15px;color:#242424;left:330.70px;transform:scaleX(1.0506);">Cliente 01</span>
<svg style="left:1894px;top:242px;" width="13" height="8" viewBox="0 0 13 8"><path d="M1 1.2 L6.5 6.7 L12 1.2" fill="none" stroke="#3a3a3a" stroke-width="1.3" stroke-linecap="round" stroke-linejoin="round"/></svg>
<div style="left:2px;top:269px;width:1894px;height:24px;background:#f0f0f0;"></div>
<div style="left:2px;top:293px;width:34px;height:660px;background:#f0f0f0;"></div>
<div style="left:36px;top:293px;width:1860px;height:660px;background:#fff;"></div>
<div style="left:895px;top:269px;width:118px;height:22px;background:#e0e0e0;"></div>
<div style="left:895px;top:291px;width:118px;height:2px;background:#107c41;"></div>
<div style="left:53px;top:271px;width:1px;height:21px;background:#d4d4d4;"></div>
<span class="t" style="top:274.00px;font-size:15.6px;line-height:15.6px;color:#444;left:40.11px;transform:scaleX(0.9400);">A</span>
<div style="left:162px;top:271px;width:1px;height:21px;background:#d4d4d4;"></div>
<span class="t" style="top:274.00px;font-size:15.6px;line-height:15.6px;color:#444;left:103.11px;transform:scaleX(0.9400);">B</span>
<div style="left:273px;top:271px;width:1px;height:21px;background:#d4d4d4;"></div>
<span class="t" style="top:274.00px;font-size:15.6px;line-height:15.6px;color:#444;left:212.71px;transform:scaleX(0.9400);">C</span>
<div style="left:417px;top:271px;width:1px;height:21px;background:#d4d4d4;"></div>
<span class="t" style="top:274.00px;font-size:15.6px;line-height:15.6px;color:#444;left:340.21px;transform:scaleX(0.9400);">D</span>
<div style="left:435px;top:271px;width:1px;height:21px;background:#d4d4d4;"></div>
<span class="t" style="top:274.00px;font-size:15.6px;line-height:15.6px;color:#444;left:421.61px;transform:scaleX(0.9400);">E</span>
<div style="left:560px;top:271px;width:1px;height:21px;background:#d4d4d4;"></div>
<span class="t" style="top:274.00px;font-size:15.6px;line-height:15.6px;color:#444;left:493.52px;transform:scaleX(0.9400);">F</span>
<div style="left:578px;top:271px;width:1px;height:21px;background:#d4d4d4;"></div>
<span class="t" style="top:274.00px;font-size:15.6px;line-height:15.6px;color:#444;left:563.80px;transform:scaleX(0.9400);">G</span>
<div style="left:726px;top:271px;width:1px;height:21px;background:#d4d4d4;"></div>
<span class="t" style="top:274.00px;font-size:15.6px;line-height:15.6px;color:#444;left:647.21px;transform:scaleX(0.9400);">H</span>
<div style="left:744px;top:271px;width:1px;height:21px;background:#d4d4d4;"></div>
<span class="t" style="top:274.00px;font-size:15.6px;line-height:15.6px;color:#444;left:733.46px;transform:scaleX(0.9400);">I</span>
<div style="left:877px;top:271px;width:1px;height:21px;background:#d4d4d4;"></div>
<span class="t" style="top:274.00px;font-size:15.6px;line-height:15.6px;color:#444;left:807.34px;transform:scaleX(0.9400);">J</span>
<div style="left:895px;top:271px;width:1px;height:21px;background:#d4d4d4;"></div>
<span class="t" style="top:274.00px;font-size:15.6px;line-height:15.6px;color:#444;left:881.61px;transform:scaleX(0.9400);">K</span>
<div style="left:1012px;top:271px;width:1px;height:21px;background:#d4d4d4;"></div>
<span class="t" style="top:274.00px;font-size:15.6px;line-height:15.6px;color:#107c41;left:949.92px;transform:scaleX(0.9400);">L</span>
<div style="left:1092px;top:271px;width:1px;height:21px;background:#d4d4d4;"></div>
<span class="t" style="top:274.00px;font-size:15.6px;line-height:15.6px;color:#444;left:1046.39px;transform:scaleX(0.9400);">M</span>
<div style="left:1172px;top:271px;width:1px;height:21px;background:#d4d4d4;"></div>
<span class="t" style="top:274.00px;font-size:15.6px;line-height:15.6px;color:#444;left:1127.21px;transform:scaleX(0.9400);">N</span>
<div style="left:1252px;top:271px;width:1px;height:21px;background:#d4d4d4;"></div>
<span class="t" style="top:274.00px;font-size:15.6px;line-height:15.6px;color:#444;left:1206.80px;transform:scaleX(0.9400);">O</span>
<div style="left:1332px;top:271px;width:1px;height:21px;background:#d4d4d4;"></div>
<span class="t" style="top:274.00px;font-size:15.6px;line-height:15.6px;color:#444;left:1287.61px;transform:scaleX(0.9400);">P</span>
<div style="left:1412px;top:271px;width:1px;height:21px;background:#d4d4d4;"></div>
<span class="t" style="top:274.00px;font-size:15.6px;line-height:15.6px;color:#444;left:1366.80px;transform:scaleX(0.9400);">Q</span>
<div style="left:1492px;top:271px;width:1px;height:21px;background:#d4d4d4;"></div>
<span class="t" style="top:274.00px;font-size:15.6px;line-height:15.6px;color:#444;left:1447.21px;transform:scaleX(0.9400);">R</span>
<div style="left:1572px;top:271px;width:1px;height:21px;background:#d4d4d4;"></div>
<span class="t" style="top:274.00px;font-size:15.6px;line-height:15.6px;color:#444;left:1527.61px;transform:scaleX(0.9400);">S</span>
<div style="left:1652px;top:271px;width:1px;height:21px;background:#d4d4d4;"></div>
<span class="t" style="top:274.00px;font-size:15.6px;line-height:15.6px;color:#444;left:1608.02px;transform:scaleX(0.9400);">T</span>
<div style="left:1732px;top:271px;width:1px;height:21px;background:#d4d4d4;"></div>
<span class="t" style="top:274.00px;font-size:15.6px;line-height:15.6px;color:#444;left:1687.21px;transform:scaleX(0.9400);">U</span>
<div style="left:1812px;top:271px;width:1px;height:21px;background:#d4d4d4;"></div>
<span class="t" style="top:274.00px;font-size:15.6px;line-height:15.6px;color:#444;left:1767.61px;transform:scaleX(0.9400);">V</span>
<div style="left:1892px;top:271px;width:1px;height:21px;background:#d4d4d4;"></div>
<span class="t" style="top:274.00px;font-size:15.6px;line-height:15.6px;color:#444;left:1845.58px;transform:scaleX(0.9400);">W</span>
<div style="left:35px;top:292px;width:860px;height:1px;background:#a6a6a6;"></div>
<div style="left:1013px;top:292px;width:883px;height:1px;background:#a6a6a6;"></div>
<div style="left:35px;top:293px;width:1px;height:660px;background:#c6c6c6;"></div>
<svg style="left:16.5px;top:273.5px;" width="16" height="15.5" viewBox="0 0 16 15.5"><path d="M15.5 0 V15.5 H0 Z" fill="#dfdfdf"/></svg>
<div style="left:35px;top:269px;width:1px;height:1px;background:#111;"></div>
<div style="left:2px;top:292px;width:1px;height:1px;background:#111;"></div>
<div style="left:2px;top:371px;width:32px;height:26px;background:#e0e0e0;"></div>
<div style="left:34px;top:371px;width:2px;height:26px;background:#107c41;"></div>
<div style="left:2px;top:318px;width:33px;height:1px;background:linear-gradient(90deg,rgba(208,208,208,0) 0,#d0d0d0 45%);"></div>
<span class="t" style="top:299.00px;font-size:16.4px;line-height:16.4px;color:#444;left:14.46px;transform:scaleX(0.9300);">1</span>
<div style="left:2px;top:344px;width:33px;height:1px;background:linear-gradient(90deg,rgba(208,208,208,0) 0,#d0d0d0 45%);"></div>
<span class="t" style="top:325.00px;font-size:16.4px;line-height:16.4px;color:#444;left:14.46px;transform:scaleX(0.9300);">2</span>
<div style="left:2px;top:370px;width:33px;height:1px;background:linear-gradient(90deg,rgba(208,208,208,0) 0,#d0d0d0 45%);"></div>
<span class="t" style="top:351.00px;font-size:16.4px;line-height:16.4px;color:#444;left:14.46px;transform:scaleX(0.9300);">3</span>
<div style="left:2px;top:396px;width:33px;height:1px;background:linear-gradient(90deg,rgba(208,208,208,0) 0,#d0d0d0 45%);"></div>
<span class="t" style="top:377.00px;font-size:16.4px;line-height:16.4px;color:#107c41;left:14.46px;transform:scaleX(0.9300);">4</span>
<div style="left:2px;top:422px;width:33px;height:1px;background:linear-gradient(90deg,rgba(208,208,208,0) 0,#d0d0d0 45%);"></div>
<span class="t" style="top:403.00px;font-size:16.4px;line-height:16.4px;color:#444;left:14.46px;transform:scaleX(0.9300);">5</span>
<div style="left:2px;top:448px;width:33px;height:1px;background:linear-gradient(90deg,rgba(208,208,208,0) 0,#d0d0d0 45%);"></div>
<span class="t" style="top:429.00px;font-size:16.4px;line-height:16.4px;color:#444;left:14.46px;transform:scaleX(0.9300);">6</span>
<div style="left:2px;top:474px;width:33px;height:1px;background:linear-gradient(90deg,rgba(208,208,208,0) 0,#d0d0d0 45%);"></div>
<span class="t" style="top:455.00px;font-size:16.4px;line-height:16.4px;color:#444;left:14.46px;transform:scaleX(0.9300);">7</span>
<div style="left:2px;top:500px;width:33px;height:1px;background:linear-gradient(90deg,rgba(208,208,208,0) 0,#d0d0d0 45%);"></div>
<span class="t" style="top:481.00px;font-size:16.4px;line-height:16.4px;color:#444;left:14.46px;transform:scaleX(0.9300);">8</span>
<div style="left:2px;top:526px;width:33px;height:1px;background:linear-gradient(90deg,rgba(208,208,208,0) 0,#d0d0d0 45%);"></div>
<span class="t" style="top:507.00px;font-size:16.4px;line-height:16.4px;color:#444;left:14.46px;transform:scaleX(0.9300);">9</span>
<div style="left:2px;top:552px;width:33px;height:1px;background:linear-gradient(90deg,rgba(208,208,208,0) 0,#d0d0d0 45%);"></div>
<span class="t" style="top:533.00px;font-size:16.4px;line-height:16.4px;color:#444;left:10.22px;transform:scaleX(0.9300);">10</span>
<div style="left:2px;top:578px;width:33px;height:1px;background:linear-gradient(90deg,rgba(208,208,208,0) 0,#d0d0d0 45%);"></div>
<span class="t" style="top:559.00px;font-size:16.4px;line-height:16.4px;color:#444;left:10.79px;transform:scaleX(0.9300);">11</span>
<div style="left:2px;top:604px;width:33px;height:1px;background:linear-gradient(90deg,rgba(208,208,208,0) 0,#d0d0d0 45%);"></div>
<span class="t" style="top:585.00px;font-size:16.4px;line-height:16.4px;color:#444;left:10.22px;transform:scaleX(0.9300);">12</span>
<div style="left:2px;top:630px;width:33px;height:1px;background:linear-gradient(90deg,rgba(208,208,208,0) 0,#d0d0d0 45%);"></div>
<span class="t" style="top:611.00px;font-size:16.4px;line-height:16.4px;color:#444;left:10.22px;transform:scaleX(0.9300);">13</span>
<div style="left:2px;top:656px;width:33px;height:1px;background:linear-gradient(90deg,rgba(208,208,208,0) 0,#d0d0d0 45%);"></div>
<span class="t" style="top:637.00px;font-size:16.4px;line-height:16.4px;color:#444;left:10.22px;transform:scaleX(0.9300);">14</span>
<div style="left:2px;top:682px;width:33px;height:1px;background:linear-gradient(90deg,rgba(208,208,208,0) 0,#d0d0d0 45%);"></div>
<span class="t" style="top:663.00px;font-size:16.4px;line-height:16.4px;color:#444;left:10.22px;transform:scaleX(0.9300);">15</span>
<div style="left:2px;top:708px;width:33px;height:1px;background:linear-gradient(90deg,rgba(208,208,208,0) 0,#d0d0d0 45%);"></div>
<span class="t" style="top:689.00px;font-size:16.4px;line-height:16.4px;color:#444;left:10.22px;transform:scaleX(0.9300);">16</span>
<div style="left:2px;top:734px;width:33px;height:1px;background:linear-gradient(90deg,rgba(208,208,208,0) 0,#d0d0d0 45%);"></div>
<span class="t" style="top:715.00px;font-size:16.4px;line-height:16.4px;color:#444;left:10.22px;transform:scaleX(0.9300);">17</span>
<div style="left:2px;top:760px;width:33px;height:1px;background:linear-gradient(90deg,rgba(208,208,208,0) 0,#d0d0d0 45%);"></div>
<span class="t" style="top:741.00px;font-size:16.4px;line-height:16.4px;color:#444;left:10.22px;transform:scaleX(0.9300);">18</span>
<div style="left:2px;top:786px;width:33px;height:1px;background:linear-gradient(90deg,rgba(208,208,208,0) 0,#d0d0d0 45%);"></div>
<span class="t" style="top:767.00px;font-size:16.4px;line-height:16.4px;color:#444;left:10.22px;transform:scaleX(0.9300);">19</span>
<div style="left:2px;top:812px;width:33px;height:1px;background:linear-gradient(90deg,rgba(208,208,208,0) 0,#d0d0d0 45%);"></div>
<span class="t" style="top:793.00px;font-size:16.4px;line-height:16.4px;color:#444;left:10.22px;transform:scaleX(0.9300);">20</span>
<div style="left:2px;top:838px;width:33px;height:1px;background:linear-gradient(90deg,rgba(208,208,208,0) 0,#d0d0d0 45%);"></div>
<span class="t" style="top:819.00px;font-size:16.4px;line-height:16.4px;color:#444;left:10.22px;transform:scaleX(0.9300);">21</span>
<div style="left:2px;top:864px;width:33px;height:1px;background:linear-gradient(90deg,rgba(208,208,208,0) 0,#d0d0d0 45%);"></div>
<span class="t" style="top:845.00px;font-size:16.4px;line-height:16.4px;color:#444;left:10.22px;transform:scaleX(0.9300);">22</span>
<div style="left:2px;top:890px;width:33px;height:1px;background:linear-gradient(90deg,rgba(208,208,208,0) 0,#d0d0d0 45%);"></div>
<span class="t" style="top:871.00px;font-size:16.4px;line-height:16.4px;color:#444;left:10.22px;transform:scaleX(0.9300);">23</span>
<div style="left:2px;top:916px;width:33px;height:1px;background:linear-gradient(90deg,rgba(208,208,208,0) 0,#d0d0d0 45%);"></div>
<span class="t" style="top:897.00px;font-size:16.4px;line-height:16.4px;color:#444;left:10.22px;transform:scaleX(0.9300);">24</span>
<div style="left:2px;top:942px;width:33px;height:1px;background:linear-gradient(90deg,rgba(208,208,208,0) 0,#d0d0d0 45%);"></div>
<span class="t" style="top:923.00px;font-size:16.4px;line-height:16.4px;color:#444;left:10.22px;transform:scaleX(0.9300);">25</span>
<span class="t" style="top:949.00px;font-size:16.4px;line-height:16.4px;color:#444;left:10.22px;transform:scaleX(0.9300);">26</span>
<div style="left:53px;top:344px;width:365px;height:27px;background:#000;"></div>
<div style="left:53px;top:396px;width:365px;height:1px;background:#000;"></div>
<div style="left:53px;top:422px;width:365px;height:1px;background:#000;"></div>
<div style="left:53px;top:448px;width:365px;height:1px;background:#000;"></div>
<div style="left:53px;top:474px;width:365px;height:1px;background:#000;"></div>
<div style="left:53px;top:500px;width:365px;height:1px;background:#000;"></div>
<div style="left:53px;top:526px;width:365px;height:1px;background:#000;"></div>
<div style="left:53px;top:552px;width:365px;height:1px;background:#000;"></div>
<div style="left:53px;top:578px;width:365px;height:1px;background:#000;"></div>
<div style="left:53px;top:604px;width:365px;height:1px;background:#000;"></div>
<div style="left:53px;top:630px;width:365px;height:1px;background:#000;"></div>
<div style="left:53px;top:656px;width:365px;height:1px;background:#000;"></div>
<div style="left:53px;top:682px;width:365px;height:1px;background:#000;"></div>
<div style="left:53px;top:708px;width:365px;height:1px;background:#000;"></div>
<div style="left:53px;top:734px;width:365px;height:1px;background:#000;"></div>
<div style="left:53px;top:760px;width:365px;height:1px;background:#000;"></div>
<div style="left:53px;top:786px;width:365px;height:1px;background:#000;"></div>
<div style="left:53px;top:812px;width:365px;height:1px;background:#000;"></div>
<div style="left:53px;top:838px;width:365px;height:1px;background:#000;"></div>
<div style="left:53px;top:864px;width:365px;height:1px;background:#000;"></div>
<div style="left:53px;top:890px;width:365px;height:1px;background:#000;"></div>
<div style="left:53px;top:916px;width:365px;height:1px;background:#000;"></div>
<div style="left:53px;top:942px;width:365px;height:1px;background:#000;"></div>
<div style="left:53px;top:968px;width:365px;height:1px;background:#000;"></div>
<div style="left:53px;top:344px;width:1px;height:610px;background:#000;"></div>
<div style="left:162px;top:344px;width:1px;height:610px;background:#000;"></div>
<div style="left:273px;top:344px;width:1px;height:610px;background:#000;"></div>
<div style="left:417px;top:344px;width:1px;height:610px;background:#000;"></div>
<span class="t" style="top:350.00px;font-size:17.5px;line-height:17.5px;color:#fff;font-weight:700;left:84.74px;transform:scaleX(1.0111);">Placa</span>
<span class="t" style="top:350.00px;font-size:17.5px;line-height:17.5px;color:#fff;font-weight:700;left:186.40px;transform:scaleX(1.0597);">Veículo</span>
<span class="t" style="top:350.00px;font-size:17.5px;line-height:17.5px;color:#fff;font-weight:700;left:279.00px;transform:scaleX(1.0522);">Tipo de Veículo</span>
<span class="t" style="top:376.00px;font-size:17.5px;line-height:17.5px;color:#000;font-style:italic;left:70.70px;transform:scaleX(1.0042);">placa001</span>
<span class="t" style="top:402.00px;font-size:17.5px;line-height:17.5px;color:#000;font-style:italic;left:70.69px;transform:scaleX(0.9903);">placa002</span>
<span class="t" style="top:428.00px;font-size:17.5px;line-height:17.5px;color:#000;font-style:italic;left:70.69px;transform:scaleX(0.9903);">placa003</span>
<span class="t" style="top:454.00px;font-size:17.5px;line-height:17.5px;color:#000;font-style:italic;left:70.69px;transform:scaleX(0.9903);">placa004</span>
<span class="t" style="top:480.00px;font-size:17.5px;line-height:17.5px;color:#000;font-style:italic;left:70.69px;transform:scaleX(0.9903);">placa005</span>
<span class="t" style="top:506.00px;font-size:17.5px;line-height:17.5px;color:#000;font-style:italic;left:70.69px;transform:scaleX(0.9903);">placa006</span>
<span class="t" style="top:532.00px;font-size:17.5px;line-height:17.5px;color:#000;font-style:italic;left:70.68px;transform:scaleX(0.9768);">placa007</span>
<span class="t" style="top:558.00px;font-size:17.5px;line-height:17.5px;color:#000;font-style:italic;left:70.69px;transform:scaleX(0.9903);">placa008</span>
<span class="t" style="top:584.00px;font-size:17.5px;line-height:17.5px;color:#000;font-style:italic;left:70.69px;transform:scaleX(0.9903);">placa009</span>
<span class="t" style="top:610.00px;font-size:17.5px;line-height:17.5px;color:#000;font-style:italic;left:70.69px;transform:scaleX(0.9903);">placa010</span>
<span class="t" style="top:636.00px;font-size:17.5px;line-height:17.5px;color:#000;font-style:italic;left:70.72px;transform:scaleX(1.0228);">placa011</span>
<span class="t" style="top:662.00px;font-size:17.5px;line-height:17.5px;color:#000;font-style:italic;left:70.69px;transform:scaleX(0.9903);">placa012</span>
<span class="t" style="top:688.00px;font-size:17.5px;line-height:17.5px;color:#000;font-style:italic;left:70.69px;transform:scaleX(0.9903);">placa013</span>
<span class="t" style="top:714.00px;font-size:17.5px;line-height:17.5px;color:#000;font-style:italic;left:70.69px;transform:scaleX(0.9903);">placa014</span>
<span class="t" style="top:740.00px;font-size:17.5px;line-height:17.5px;color:#000;font-style:italic;left:70.69px;transform:scaleX(0.9903);">placa015</span>
<span class="t" style="top:766.00px;font-size:17.5px;line-height:17.5px;color:#000;font-style:italic;left:70.69px;transform:scaleX(0.9903);">placa016</span>
<span class="t" style="top:792.00px;font-size:17.5px;line-height:17.5px;color:#000;font-style:italic;left:70.68px;transform:scaleX(0.9768);">placa017</span>
<span class="t" style="top:818.00px;font-size:17.5px;line-height:17.5px;color:#000;font-style:italic;left:70.69px;transform:scaleX(0.9903);">placa018</span>
<span class="t" style="top:844.00px;font-size:17.5px;line-height:17.5px;color:#000;font-style:italic;left:70.69px;transform:scaleX(0.9903);">placa019</span>
<span class="t" style="top:870.00px;font-size:17.5px;line-height:17.5px;color:#000;font-style:italic;left:70.69px;transform:scaleX(0.9903);">placa020</span>
<span class="t" style="top:896.00px;font-size:17.5px;line-height:17.5px;color:#000;font-style:italic;left:70.70px;transform:scaleX(1.0042);">placa021</span>
<span class="t" style="top:922.00px;font-size:17.5px;line-height:17.5px;color:#000;font-style:italic;left:70.69px;transform:scaleX(0.9903);">placa022</span>
<span class="t" style="top:948.00px;font-size:17.5px;line-height:17.5px;color:#000;font-style:italic;left:70.69px;transform:scaleX(0.9903);">placa023</span>
<span class="t" style="top:376.00px;font-size:17.5px;line-height:17.5px;color:#000;font-style:italic;left:184.00px;transform:scaleX(0.8495);">SAVEIRO</span>
<span class="t" style="top:402.00px;font-size:17.5px;line-height:17.5px;color:#000;font-style:italic;left:187.20px;transform:scaleX(0.8420);">STRADA</span>
<span class="t" style="top:428.00px;font-size:17.5px;line-height:17.5px;color:#000;font-style:italic;left:172.80px;transform:scaleX(0.9293);">CAMINHÃO</span>
<span class="t" style="top:454.00px;font-size:17.5px;line-height:17.5px;color:#000;font-style:italic;left:184.00px;transform:scaleX(0.8495);">SAVEIRO</span>
<span class="t" style="top:480.00px;font-size:17.5px;line-height:17.5px;color:#000;font-style:italic;left:187.20px;transform:scaleX(0.8420);">STRADA</span>
<span class="t" style="top:506.00px;font-size:17.5px;line-height:17.5px;color:#000;font-style:italic;left:172.80px;transform:scaleX(0.9293);">CAMINHÃO</span>
<span class="t" style="top:532.00px;font-size:17.5px;line-height:17.5px;color:#000;font-style:italic;left:184.00px;transform:scaleX(0.8495);">SAVEIRO</span>
<span class="t" style="top:558.00px;font-size:17.5px;line-height:17.5px;color:#000;font-style:italic;left:187.20px;transform:scaleX(0.8420);">STRADA</span>
<span class="t" style="top:584.00px;font-size:17.5px;line-height:17.5px;color:#000;font-style:italic;left:172.80px;transform:scaleX(0.9293);">CAMINHÃO</span>
<span class="t" style="top:610.00px;font-size:17.5px;line-height:17.5px;color:#000;font-style:italic;left:184.00px;transform:scaleX(0.8495);">SAVEIRO</span>
<span class="t" style="top:636.00px;font-size:17.5px;line-height:17.5px;color:#000;font-style:italic;left:187.20px;transform:scaleX(0.8420);">STRADA</span>
<span class="t" style="top:662.00px;font-size:17.5px;line-height:17.5px;color:#000;font-style:italic;left:172.80px;transform:scaleX(0.9293);">CAMINHÃO</span>
<span class="t" style="top:688.00px;font-size:17.5px;line-height:17.5px;color:#000;font-style:italic;left:184.00px;transform:scaleX(0.8495);">SAVEIRO</span>
<span class="t" style="top:714.00px;font-size:17.5px;line-height:17.5px;color:#000;font-style:italic;left:187.20px;transform:scaleX(0.8420);">STRADA</span>
<span class="t" style="top:740.00px;font-size:17.5px;line-height:17.5px;color:#000;font-style:italic;left:172.80px;transform:scaleX(0.9293);">CAMINHÃO</span>
<span class="t" style="top:766.00px;font-size:17.5px;line-height:17.5px;color:#000;font-style:italic;left:184.00px;transform:scaleX(0.8495);">SAVEIRO</span>
<span class="t" style="top:792.00px;font-size:17.5px;line-height:17.5px;color:#000;font-style:italic;left:187.20px;transform:scaleX(0.8420);">STRADA</span>
<span class="t" style="top:818.00px;font-size:17.5px;line-height:17.5px;color:#000;font-style:italic;left:172.80px;transform:scaleX(0.9293);">CAMINHÃO</span>
<span class="t" style="top:844.00px;font-size:17.5px;line-height:17.5px;color:#000;font-style:italic;left:184.00px;transform:scaleX(0.8495);">SAVEIRO</span>
<span class="t" style="top:870.00px;font-size:17.5px;line-height:17.5px;color:#000;font-style:italic;left:187.20px;transform:scaleX(0.8420);">STRADA</span>
<span class="t" style="top:896.00px;font-size:17.5px;line-height:17.5px;color:#000;font-style:italic;left:172.80px;transform:scaleX(0.9293);">CAMINHÃO</span>
<span class="t" style="top:922.00px;font-size:17.5px;line-height:17.5px;color:#000;font-style:italic;left:184.00px;transform:scaleX(0.8495);">SAVEIRO</span>
<span class="t" style="top:948.00px;font-size:17.5px;line-height:17.5px;color:#000;font-style:italic;left:187.20px;transform:scaleX(0.8420);">STRADA</span>
<span class="t" style="top:376.00px;font-size:17.5px;line-height:17.5px;color:#000;font-style:italic;left:311.99px;transform:scaleX(1.0123);">Terceiro</span>
<span class="t" style="top:402.00px;font-size:17.5px;line-height:17.5px;color:#000;font-style:italic;left:315.35px;transform:scaleX(1.0215);">Próprio</span>
<span class="t" style="top:428.00px;font-size:17.5px;line-height:17.5px;color:#000;font-style:italic;left:311.99px;transform:scaleX(1.0123);">Terceiro</span>
<span class="t" style="top:454.00px;font-size:17.5px;line-height:17.5px;color:#000;font-style:italic;left:315.35px;transform:scaleX(1.0215);">Próprio</span>
<span class="t" style="top:480.00px;font-size:17.5px;line-height:17.5px;color:#000;font-style:italic;left:311.99px;transform:scaleX(1.0123);">Terceiro</span>
<span class="t" style="top:506.00px;font-size:17.5px;line-height:17.5px;color:#000;font-style:italic;left:315.35px;transform:scaleX(1.0215);">Próprio</span>
<span class="t" style="top:532.00px;font-size:17.5px;line-height:17.5px;color:#000;font-style:italic;left:311.99px;transform:scaleX(1.0123);">Terceiro</span>
<span class="t" style="top:558.00px;font-size:17.5px;line-height:17.5px;color:#000;font-style:italic;left:315.35px;transform:scaleX(1.0215);">Próprio</span>
<span class="t" style="top:584.00px;font-size:17.5px;line-height:17.5px;color:#000;font-style:italic;left:311.99px;transform:scaleX(1.0123);">Terceiro</span>
<span class="t" style="top:610.00px;font-size:17.5px;line-height:17.5px;color:#000;font-style:italic;left:315.35px;transform:scaleX(1.0215);">Próprio</span>
<span class="t" style="top:636.00px;font-size:17.5px;line-height:17.5px;color:#000;font-style:italic;left:311.99px;transform:scaleX(1.0123);">Terceiro</span>
<span class="t" style="top:662.00px;font-size:17.5px;line-height:17.5px;color:#000;font-style:italic;left:315.35px;transform:scaleX(1.0215);">Próprio</span>
<span class="t" style="top:688.00px;font-size:17.5px;line-height:17.5px;color:#000;font-style:italic;left:311.99px;transform:scaleX(1.0123);">Terceiro</span>
<span class="t" style="top:714.00px;font-size:17.5px;line-height:17.5px;color:#000;font-style:italic;left:315.35px;transform:scaleX(1.0215);">Próprio</span>
<span class="t" style="top:740.00px;font-size:17.5px;line-height:17.5px;color:#000;font-style:italic;left:311.99px;transform:scaleX(1.0123);">Terceiro</span>
<span class="t" style="top:766.00px;font-size:17.5px;line-height:17.5px;color:#000;font-style:italic;left:315.35px;transform:scaleX(1.0215);">Próprio</span>
<span class="t" style="top:792.00px;font-size:17.5px;line-height:17.5px;color:#000;font-style:italic;left:311.99px;transform:scaleX(1.0123);">Terceiro</span>
<span class="t" style="top:818.00px;font-size:17.5px;line-height:17.5px;color:#000;font-style:italic;left:315.35px;transform:scaleX(1.0215);">Próprio</span>
<span class="t" style="top:844.00px;font-size:17.5px;line-height:17.5px;color:#000;font-style:italic;left:311.99px;transform:scaleX(1.0123);">Terceiro</span>
<span class="t" style="top:870.00px;font-size:17.5px;line-height:17.5px;color:#000;font-style:italic;left:315.35px;transform:scaleX(1.0215);">Próprio</span>
<span class="t" style="top:896.00px;font-size:17.5px;line-height:17.5px;color:#000;font-style:italic;left:311.99px;transform:scaleX(1.0123);">Terceiro</span>
<span class="t" style="top:922.00px;font-size:17.5px;line-height:17.5px;color:#000;font-style:italic;left:315.35px;transform:scaleX(1.0215);">Próprio</span>
<span class="t" style="top:948.00px;font-size:17.5px;line-height:17.5px;color:#000;font-style:italic;left:311.99px;transform:scaleX(1.0123);">Terceiro</span>
<div style="left:435px;top:344px;width:126px;height:27px;background:#000;"></div>
<div style="left:435px;top:396px;width:126px;height:1px;background:#000;"></div>
<div style="left:435px;top:422px;width:126px;height:1px;background:#000;"></div>
<div style="left:435px;top:448px;width:126px;height:1px;background:#000;"></div>
<div style="left:435px;top:474px;width:126px;height:1px;background:#000;"></div>
<div style="left:435px;top:500px;width:126px;height:1px;background:#000;"></div>
<div style="left:435px;top:526px;width:126px;height:1px;background:#000;"></div>
<div style="left:435px;top:552px;width:126px;height:1px;background:#000;"></div>
<div style="left:435px;top:578px;width:126px;height:1px;background:#000;"></div>
<div style="left:435px;top:604px;width:126px;height:1px;background:#000;"></div>
<div style="left:435px;top:630px;width:126px;height:1px;background:#000;"></div>
<div style="left:435px;top:656px;width:126px;height:1px;background:#000;"></div>
<div style="left:435px;top:682px;width:126px;height:1px;background:#000;"></div>
<div style="left:435px;top:708px;width:126px;height:1px;background:#000;"></div>
<div style="left:435px;top:734px;width:126px;height:1px;background:#000;"></div>
<div style="left:435px;top:760px;width:126px;height:1px;background:#000;"></div>
<div style="left:435px;top:344px;width:1px;height:417px;background:#000;"></div>
<div style="left:560px;top:344px;width:1px;height:417px;background:#000;"></div>
<span class="t" style="top:350.00px;font-size:17.5px;line-height:17.5px;color:#fff;font-weight:700;left:477.29px;transform:scaleX(1.0603);">Filial</span>
<span class="t" style="top:376.00px;font-size:17.5px;line-height:17.5px;color:#000;font-style:italic;left:461.80px;transform:scaleX(0.9315);">FILIAL 01</span>
<span class="t" style="top:402.00px;font-size:17.5px;line-height:17.5px;color:#000;font-style:italic;left:461.80px;transform:scaleX(0.9193);">FILIAL 02</span>
<span class="t" style="top:428.00px;font-size:17.5px;line-height:17.5px;color:#000;font-style:italic;left:461.80px;transform:scaleX(0.9193);">FILIAL 03</span>
<span class="t" style="top:454.00px;font-size:17.5px;line-height:17.5px;color:#000;font-style:italic;left:461.80px;transform:scaleX(0.9193);">FILIAL 04</span>
<span class="t" style="top:480.00px;font-size:17.5px;line-height:17.5px;color:#000;font-style:italic;left:461.80px;transform:scaleX(0.9193);">FILIAL 05</span>
<span class="t" style="top:506.00px;font-size:17.5px;line-height:17.5px;color:#000;font-style:italic;left:461.80px;transform:scaleX(0.9193);">FILIAL 06</span>
<span class="t" style="top:532.00px;font-size:17.5px;line-height:17.5px;color:#000;font-style:italic;left:461.80px;transform:scaleX(0.9074);">FILIAL 07</span>
<span class="t" style="top:558.00px;font-size:17.5px;line-height:17.5px;color:#000;font-style:italic;left:461.80px;transform:scaleX(0.9193);">FILIAL 08</span>
<span class="t" style="top:584.00px;font-size:17.5px;line-height:17.5px;color:#000;font-style:italic;left:461.80px;transform:scaleX(0.9193);">FILIAL 09</span>
<span class="t" style="top:610.00px;font-size:17.5px;line-height:17.5px;color:#000;font-style:italic;left:461.80px;transform:scaleX(0.9193);">FILIAL 10</span>
<span class="t" style="top:636.00px;font-size:17.5px;line-height:17.5px;color:#000;font-style:italic;left:461.80px;transform:scaleX(0.9479);">FILIAL 11</span>
<span class="t" style="top:662.00px;font-size:17.5px;line-height:17.5px;color:#000;font-style:italic;left:461.80px;transform:scaleX(0.9193);">FILIAL 12</span>
<span class="t" style="top:688.00px;font-size:17.5px;line-height:17.5px;color:#000;font-style:italic;left:461.80px;transform:scaleX(0.9193);">FILIAL 13</span>
<span class="t" style="top:714.00px;font-size:17.5px;line-height:17.5px;color:#000;font-style:italic;left:461.80px;transform:scaleX(0.9193);">FILIAL 14</span>
<span class="t" style="top:740.00px;font-size:17.5px;line-height:17.5px;color:#000;font-style:italic;left:461.80px;transform:scaleX(0.9193);">FILIAL 15</span>
<div style="left:578px;top:344px;width:149px;height:27px;background:#000;"></div>
<div style="left:578px;top:396px;width:149px;height:1px;background:#000;"></div>
<div style="left:578px;top:422px;width:149px;height:1px;background:#000;"></div>
<div style="left:578px;top:448px;width:149px;height:1px;background:#000;"></div>
<div style="left:578px;top:474px;width:149px;height:1px;background:#000;"></div>
<div style="left:578px;top:500px;width:149px;height:1px;background:#000;"></div>
<div style="left:578px;top:526px;width:149px;height:1px;background:#000;"></div>
<div style="left:578px;top:552px;width:149px;height:1px;background:#000;"></div>
<div style="left:578px;top:578px;width:149px;height:1px;background:#000;"></div>
<div style="left:578px;top:604px;width:149px;height:1px;background:#000;"></div>
<div style="left:578px;top:630px;width:149px;height:1px;background:#000;"></div>
<div style="left:578px;top:656px;width:149px;height:1px;background:#000;"></div>
<div style="left:578px;top:682px;width:149px;height:1px;background:#000;"></div>
<div style="left:578px;top:708px;width:149px;height:1px;background:#000;"></div>
<div style="left:578px;top:734px;width:149px;height:1px;background:#000;"></div>
<div style="left:578px;top:760px;width:149px;height:1px;background:#000;"></div>
<div style="left:578px;top:344px;width:1px;height:417px;background:#000;"></div>
<div style="left:726px;top:344px;width:1px;height:417px;background:#000;"></div>
<span class="t" style="top:350.00px;font-size:17.5px;line-height:17.5px;color:#fff;font-weight:700;left:629.32px;transform:scaleX(1.0332);">Local</span>
<span class="t" style="top:376.00px;font-size:17.5px;line-height:17.5px;color:#000;font-style:italic;left:612.20px;transform:scaleX(0.9651);">São Paulo</span>
<span class="t" style="top:402.00px;font-size:17.5px;line-height:17.5px;color:#000;font-style:italic;left:596.55px;transform:scaleX(0.9681);">Rio de Janeiro</span>
<span class="t" style="top:428.00px;font-size:17.5px;line-height:17.5px;color:#000;font-style:italic;left:593.00px;transform:scaleX(1.0135);">Belo Horizonte</span>
<span class="t" style="top:454.00px;font-size:17.5px;line-height:17.5px;color:#000;font-style:italic;left:617.00px;transform:scaleX(0.9766);">Salvador</span>
<div style="left:744px;top:344px;width:134px;height:27px;background:#000;"></div>
<div style="left:744px;top:396px;width:134px;height:1px;background:#000;"></div>
<div style="left:744px;top:422px;width:134px;height:1px;background:#000;"></div>
<div style="left:744px;top:448px;width:134px;height:1px;background:#000;"></div>
<div style="left:744px;top:474px;width:134px;height:1px;background:#000;"></div>
<div style="left:744px;top:500px;width:134px;height:1px;background:#000;"></div>
<div style="left:744px;top:526px;width:134px;height:1px;background:#000;"></div>
<div style="left:744px;top:552px;width:134px;height:1px;background:#000;"></div>
<div style="left:744px;top:578px;width:134px;height:1px;background:#000;"></div>
<div style="left:744px;top:604px;width:134px;height:1px;background:#000;"></div>
<div style="left:744px;top:630px;width:134px;height:1px;background:#000;"></div>
<div style="left:744px;top:656px;width:134px;height:1px;background:#000;"></div>
<div style="left:744px;top:682px;width:134px;height:1px;background:#000;"></div>
<div style="left:744px;top:708px;width:134px;height:1px;background:#000;"></div>
<div style="left:744px;top:734px;width:134px;height:1px;background:#000;"></div>
<div style="left:744px;top:760px;width:134px;height:1px;background:#000;"></div>
<div style="left:744px;top:344px;width:1px;height:417px;background:#000;"></div>
<div style="left:877px;top:344px;width:1px;height:417px;background:#000;"></div>
<span class="t" style="top:350.00px;font-size:17.5px;line-height:17.5px;color:#fff;font-weight:700;left:766.78px;transform:scaleX(1.1177);">Motorista</span>
<span class="t" style="top:376.00px;font-size:17.5px;line-height:17.5px;color:#000;font-style:italic;left:785.20px;transform:scaleX(0.9681);">Carlos</span>
<span class="t" style="top:402.00px;font-size:17.5px;line-height:17.5px;color:#000;font-style:italic;left:783.85px;transform:scaleX(0.9855);">Miguel</span>
<span class="t" style="top:428.00px;font-size:17.5px;line-height:17.5px;color:#000;font-style:italic;left:792.91px;transform:scaleX(0.9078);">João</span>
<span class="t" style="top:454.00px;font-size:17.5px;line-height:17.5px;color:#000;font-style:italic;left:780.70px;transform:scaleX(0.9609);">Ricardo</span>
<div style="left:895px;top:344px;width:118px;height:27px;background:#000;"></div>
<div style="left:895px;top:396px;width:118px;height:1px;background:#000;"></div>
<div style="left:895px;top:422px;width:118px;height:1px;background:#000;"></div>
<div style="left:895px;top:448px;width:118px;height:1px;background:#000;"></div>
<div style="left:895px;top:474px;width:118px;height:1px;background:#000;"></div>
<div style="left:895px;top:500px;width:118px;height:1px;background:#000;"></div>
<div style="left:895px;top:526px;width:118px;height:1px;background:#000;"></div>
<div style="left:895px;top:552px;width:118px;height:1px;background:#000;"></div>
<div style="left:895px;top:578px;width:118px;height:1px;background:#000;"></div>
<div style="left:895px;top:604px;width:118px;height:1px;background:#000;"></div>
<div style="left:895px;top:630px;width:118px;height:1px;background:#000;"></div>
<div style="left:895px;top:656px;width:118px;height:1px;background:#000;"></div>
<div style="left:895px;top:682px;width:118px;height:1px;background:#000;"></div>
<div style="left:895px;top:708px;width:118px;height:1px;background:#000;"></div>
<div style="left:895px;top:734px;width:118px;height:1px;background:#000;"></div>
<div style="left:895px;top:760px;width:118px;height:1px;background:#000;"></div>
<div style="left:895px;top:344px;width:1px;height:417px;background:#000;"></div>
<div style="left:1012px;top:344px;width:1px;height:417px;background:#000;"></div>
<span class="t" style="top:350.00px;font-size:17.5px;line-height:17.5px;color:#fff;font-weight:700;left:923.20px;transform:scaleX(1.0680);">Cliente</span>
<span class="t" style="top:376.00px;font-size:17.5px;line-height:17.5px;color:#000;font-style:italic;left:913.65px;transform:scaleX(1.0030);">Cliente 01</span>
<span class="t" style="top:402.00px;font-size:17.5px;line-height:17.5px;color:#000;font-style:italic;left:913.65px;transform:scaleX(0.9903);">Cliente 02</span>
<span class="t" style="top:428.00px;font-size:17.5px;line-height:17.5px;color:#000;font-style:italic;left:913.65px;transform:scaleX(0.9903);">Cliente 03</span>
<span class="t" style="top:454.00px;font-size:17.5px;line-height:17.5px;color:#000;font-style:italic;left:913.65px;transform:scaleX(0.9903);">Cliente 04</span>
<div style="left:894px;top:369px;width:120px;height:29px;border:2px solid #107c41;"></div>
<div style="left:1009px;top:393px;width:6px;height:6px;background:#fff;"></div>
<div style="left:1010px;top:394px;width:5px;height:5px;background:#107c41;"></div>
<div style="left:2px;top:953px;width:1920px;height:40px;background:linear-gradient(90deg,#e8ecea 0,#e8ebec 1000px,#e8eaec 1920px);"></div>
<div style="left:1899.5px;top:269px;width:20.5px;height:687px;background:#f3f3f3;border-radius:10px;"></div>
<div style="left:1896px;top:269px;width:3px;height:684px;background:#e4ebe7;"></div>
<svg style="left:1903.7px;top:275px;" width="12" height="8" viewBox="0 0 12 8"><path d="M6 0.5 L11.5 7.5 H0.5 Z" fill="#6e6e6e" stroke="#6e6e6e" stroke-width="0.8" stroke-linejoin="round"/></svg>
<div style="left:1904px;top:290px;width:11px;height:582.5px;background:#6e6e6e;border-radius:5.5px;"></div>
<svg style="left:1903.7px;top:941.5px;" width="12" height="8" viewBox="0 0 12 8"><path d="M6 7.5 L11.5 0.5 H0.5 Z" fill="#6e6e6e" stroke="#6e6e6e" stroke-width="0.8" stroke-linejoin="round"/></svg>
<svg style="left:33.5px;top:965.5px;" width="8" height="13" viewBox="0 0 8 13"><path d="M7 1 L1.2 6.5 L7 12" fill="none" stroke="#a0a0a0" stroke-width="1.3" stroke-linecap="round" stroke-linejoin="round"/></svg>
<svg style="left:75px;top:965.5px;" width="8" height="13" viewBox="0 0 8 13"><path d="M1 1 L6.8 6.5 L1 12" fill="none" stroke="#a0a0a0" stroke-width="1.3" stroke-linecap="round" stroke-linejoin="round"/></svg>
<span class="t" style="top:966.00px;font-size:17.5px;line-height:17.5px;color:#333;left:154.45px;transform:scaleX(0.9499);">Frotas</span>
<div style="left:219px;top:961px;width:1px;height:23.5px;background:#cfcfcf;"></div>
<div style="left:225px;top:953px;width:100.5px;height:35px;background:#fff;border-radius:0 0 7px 7px;box-shadow:0 0.5px 1px rgba(0,0,0,0.08);"></div>
<span class="t" style="top:962.00px;font-size:17.5px;line-height:17.5px;color:#1a1a1a;font-weight:700;left:235.30px;transform:scaleX(0.9307);">Cadastros</span>
<div style="left:235px;top:983px;width:80.5px;height:2.2px;background:#107c41;border-radius:1px;"></div>
<div style="left:330px;top:961px;width:1px;height:23.5px;background:#cfcfcf;"></div>
<svg style="left:383px;top:965px;" width="15" height="15" viewBox="0 0 15 15"><path d="M7.5 0.8 V14.2 M0.8 7.5 H14.2" stroke="#3a3a3a" stroke-width="1.4" stroke-linecap="round"/></svg>
<div style="left:1156.6px;top:967.2px;width:2.9px;height:2.8px;background:#1f1f1f;"></div>
<div style="left:1156.6px;top:972.3px;width:2.9px;height:2.8px;background:#1f1f1f;"></div>
<div style="left:1156.6px;top:977.4px;width:2.9px;height:2.8px;background:#1f1f1f;"></div>
<div style="left:1178px;top:961.7px;width:721px;height:21.8px;background:#f4f5f5;border-radius:10.9px;"></div>
<svg style="left:1183px;top:967px;" width="10" height="11.5" viewBox="0 0 10 11.5"><path d="M0.8 5.75 L9.2 0.8 V10.7 Z" fill="#6e6e6e" stroke="#6e6e6e" stroke-width="0.8" stroke-linejoin="round"/></svg>
<div style="left:1199px;top:967px;width:650.5px;height:11.3px;background:#6e6e6e;border-radius:5.6px;"></div>
<svg style="left:1884px;top:967px;" width="10" height="11.5" viewBox="0 0 10 11.5"><path d="M9.2 5.75 L0.8 0.8 V10.7 Z" fill="#6e6e6e" stroke="#6e6e6e" stroke-width="0.8" stroke-linejoin="round"/></svg>
<div style="left:2px;top:993px;width:1920px;height:27px;background:#f3f3f3;"></div>
<span class="t" style="top:1002.00px;font-size:12.2px;line-height:12.2px;color:#333;left:15.12px;transform:scaleX(1.0817);">Pronto</span>
<svg style="left:80px;top:999px;" width="19" height="16" viewBox="0 0 19 16"><rect x="0.7" y="0.7" width="16.5" height="13.5" fill="none" stroke="#3a3a3a" stroke-width="1.2"/><path d="M0.7 3.2 H17.2" stroke="#3a3a3a" stroke-width="1.4"/><path d="M3 6.5 H7 M3 9 H6 M3 11.5 H6" stroke="#3a3a3a" stroke-width="1"/><circle cx="12.5" cy="10.5" r="4.3" fill="#f3f3f3" stroke="#3a3a3a" stroke-width="1.3"/><circle cx="12.5" cy="10.5" r="2" fill="#3a3a3a"/></svg>
<svg style="left:120px;top:998.5px;" width="19" height="17" viewBox="0 0 19 17"><circle cx="7" cy="2.6" r="1.9" fill="none" stroke="#3a3a3a" stroke-width="1.1"/><path d="M1 5.2 C3 6.5 5 6.8 7 6.8 C9 6.8 11 6.5 13 5.2 M5 6.8 V10 L3 15.5 M9 6.8 V9.5" fill="none" stroke="#3a3a3a" stroke-width="1.1" stroke-linecap="round"/><path d="M9.5 12.5 L12 15 L17.5 9" fill="none" stroke="#3a3a3a" stroke-width="1.3" stroke-linecap="round" stroke-linejoin="round"/></svg>
<span class="t" style="top:1002.00px;font-size:12.2px;line-height:12.2px;color:#333;left:141.00px;transform:scaleX(1.0819);">Acessibilidade: tudo certo</span>
<svg style="left:1385px;top:999px;" width="19" height="16" viewBox="0 0 19 16"><path d="M9 10.5 H1 V1 H16 V6" fill="none" stroke="#3a3a3a" stroke-width="1.2"/><path d="M4 13.5 H8" stroke="#3a3a3a" stroke-width="1.2"/><circle cx="12.5" cy="11" r="2.6" fill="none" stroke="#3a3a3a" stroke-width="1.6"/><path d="M12.5 6.5 V8 M12.5 14 V15.5 M8 11 H9.5 M15.5 11 H17 M9.3 7.8 L10.4 8.9 M14.6 13.1 L15.7 14.2 M9.3 14.2 L10.4 13.1 M14.6 8.9 L15.7 7.8" stroke="#3a3a3a" stroke-width="1.3"/></svg>
<span class="t" style="top:1002.00px;font-size:12.2px;line-height:12.2px;color:#333;left:1405.13px;transform:scaleX(1.0722);">Exibir Configurações</span>
<div style="left:1550px;top:993px;width:50px;height:27px;background:#e0e0e0;"></div>
<svg style="left:1566px;top:998px;" width="18" height="17" viewBox="0 0 18 17"><rect x="0.7" y="0.7" width="16" height="15.2" fill="none" stroke="#3a3a3a" stroke-width="1.2"/><path d="M0.7 5.8 H16.7 M0.7 10.9 H16.7 M6 0.7 V15.9 M11.4 0.7 V15.9" stroke="#3a3a3a" stroke-width="1.1"/></svg>
<svg style="left:1616px;top:998px;" width="18" height="17" viewBox="0 0 18 17"><rect x="0.7" y="0.7" width="16.5" height="15.2" fill="none" stroke="#3a3a3a" stroke-width="1.2"/><rect x="4.2" y="4" width="9.5" height="8.6" fill="none" stroke="#3a3a3a" stroke-width="1.1"/><path d="M6 6.8 H12 M6 9.6 H12" stroke="#3a3a3a" stroke-width="1"/></svg>
<svg style="left:1666px;top:998px;" width="18" height="17" viewBox="0 0 18 17"><rect x="0.7" y="0.7" width="16.5" height="15.2" fill="none" stroke="#3a3a3a" stroke-width="1.2"/><path d="M6.2 0.7 V9 M11.8 0.7 V9 M0.7 9 H11.8" stroke="#3a3a3a" stroke-width="1.1" fill="none"/></svg>
<div style="left:1707px;top:1006.5px;width:10px;height:1.2px;background:#3a3a3a;"></div>
<div style="left:1723px;top:1006.6px;width:125px;height:1px;background:#6a6a6a;"></div>
<div style="left:1783px;top:999.5px;width:5.6px;height:15px;background:#4a4a4a;border-radius:1px;"></div>
<svg style="left:1853.5px;top:1002px;" width="10" height="10" viewBox="0 0 10 10"><path d="M5 0.5 V9.5 M0.5 5 H9.5" stroke="#3a3a3a" stroke-width="1.2"/></svg>
<span class="t" style="top:1002.00px;font-size:12.2px;line-height:12.2px;color:#333;left:1880.60px;transform:scaleX(0.9829);">100%</span>
</body></html>
